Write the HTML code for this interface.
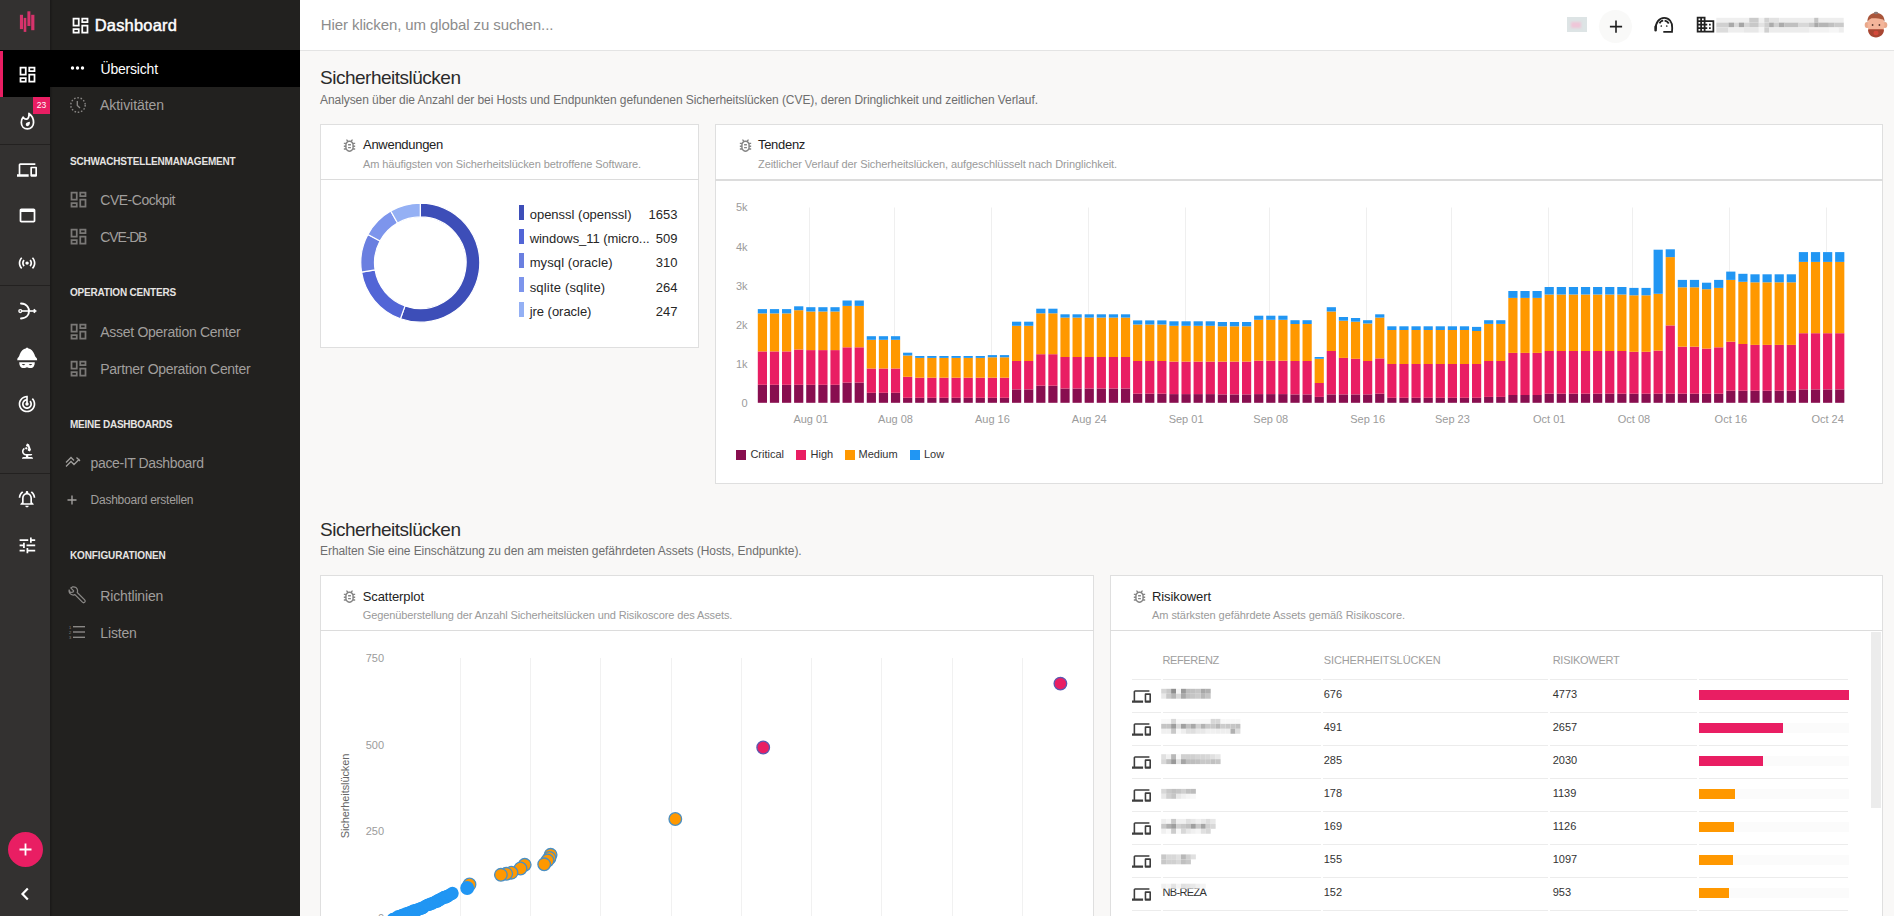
<!DOCTYPE html>
<html><head><meta charset="utf-8"><title>Dashboard</title>
<style>
html,body{margin:0;padding:0;}
body{width:1894px;height:916px;overflow:hidden;position:relative;background:#f9f8f7;font-family:"Liberation Sans", sans-serif;}
</style></head><body>
<div style="position:absolute;left:0;top:0;width:50px;height:916px;background:#333130"></div>
<div style="position:absolute;left:50px;top:0;width:250px;height:916px;background:#22211f"></div>
<div style="position:absolute;left:50px;top:0;width:3px;height:916px;background:linear-gradient(90deg,rgba(0,0,0,0.25),rgba(0,0,0,0))"></div>
<div style="position:absolute;left:0;top:50px;width:50px;height:47px;background:#000"></div>
<div style="position:absolute;left:0;top:51px;width:3px;height:46px;background:#e91e63"></div>
<div style="position:absolute;left:50px;top:50px;width:250px;height:37px;background:#000"></div>
<div style="position:absolute;left:0;top:144px;width:50px;height:1px;background:#232120"></div>
<div style="position:absolute;left:0;top:285px;width:50px;height:1px;background:#232120"></div>
<div style="position:absolute;left:0;top:473px;width:50px;height:1px;background:#232120"></div>
<div style="position:absolute;left:33px;top:97px;width:17px;height:17px;background:#e91e63"></div>
<div style="position:absolute;left:-58.50px;width:200px;text-align:center;top:100.70px;font-size:8.5px;line-height:8.5px;color:#fff;font-weight:400;white-space:nowrap;letter-spacing:-0.1px">23</div>
<svg style="position:absolute;left:0;top:0" width="50" height="50"><g fill="#d6336c"><rect x="19.9" y="14.8" width="3.1" height="14.3"/><rect x="23.7" y="17.9" width="2.6" height="14"/><rect x="27.4" y="11.3" width="3" height="14.7"/><rect x="31.2" y="14.8" width="3.2" height="15.4"/></g></svg>
<svg style="position:absolute;left:16.5px;top:64.4px" width="21" height="21" viewBox="0 0 24 24"><g><path d="M19 5v2h-4V5h4M9 5v6H5V5h4m10 8v6h-4v-6h4M9 17v2H5v-2h4M21 3h-8v6h8V3zM11 3H3v10h8V3zm10 8h-8v10h8V11zm-10 4H3v6h8v-6z" fill="#fff"/></g></svg>
<svg style="position:absolute;left:17px;top:110px" width="20" height="22" viewBox="0 0 20 22"><g transform="translate(1.2,1.2) scale(0.92,0.94)"><path d="M5.4 6.4 C6.6 8.1 8 8.8 9.3 8.4 C10.9 7.8 11.9 5.2 11.7 2.4 C14.9 4.6 16.7 8 16.7 12 C16.7 16 13.8 18.9 10 18.9 C6.2 18.9 3.4 16 3.4 12 C3.4 9.6 4.2 7.7 5.4 6.4 Z" fill="none" stroke="#fff" stroke-width="1.9" stroke-linejoin="round"/><path d="M12.7 11.3 C12.9 13.5 12.3 15.7 10.2 15.9 C8.8 16 8 14.9 8.3 13.7 C8.7 12.2 10.5 11.5 12.7 11.3 Z" fill="#fff"/></g></svg>
<svg style="position:absolute;left:17px;top:160px" width="20" height="20" viewBox="0 0 24 24"><g><path d="M4 6h18V4H4c-1.1 0-2 .9-2 2v11H0v3h14v-3H4V6zm19 2h-6c-.55 0-1 .45-1 1v10c0 .55.45 1 1 1h6c.55 0 1-.45 1-1V9c0-.55-.45-1-1-1zm-1 9h-4v-7h4v7z" fill="#fff"/></g></svg>
<svg style="position:absolute;left:16.7px;top:205.4px" width="21" height="21" viewBox="0 0 24 24"><g><path d="M19 4H5c-1.11 0-2 .9-2 2v12c0 1.1.89 2 2 2h14c1.1 0 2-.9 2-2V6c0-1.1-.89-2-2-2zm0 14H5V8h14v10z" fill="#fff"/></g></svg>
<svg style="position:absolute;left:16.8px;top:253.2px" width="20.2" height="20.2" viewBox="0 0 24 24"><g><path d="M7.76 16.24C6.67 15.16 6 13.66 6 12s.67-3.16 1.76-4.24l1.42 1.42C8.45 9.9 8 10.9 8 12c0 1.1.45 2.1 1.17 2.83l-1.41 1.41zm8.48 0C17.33 15.16 18 13.66 18 12s-.67-3.16-1.76-4.24l-1.42 1.42C15.55 9.9 16 10.9 16 12c0 1.1-.45 2.1-1.17 2.83l1.41 1.41zM12 10c-1.1 0-2 .9-2 2s.9 2 2 2 2-.9 2-2-.9-2-2-2zm8 2c0 2.21-.9 4.21-2.35 5.65l1.42 1.42C20.88 17.26 22 14.76 22 12s-1.12-5.26-2.93-7.07l-1.42 1.42C19.1 7.79 20 9.79 20 12zM6.35 6.35L4.93 4.93C3.12 6.74 2 9.24 2 12s1.12 5.26 2.93 7.07l1.42-1.42C4.9 16.21 4 14.21 4 12s.9-4.21 2.35-5.65z" fill="#fff"/></g></svg>
<svg style="position:absolute;left:14px;top:299px" width="26" height="24" viewBox="0 0 26 24"><circle cx="6.3" cy="12" r="1.45" fill="none" stroke="#fff" stroke-width="1.35"/><path d="M7.7 12 H20.5" stroke="#fff" stroke-width="1.6"/><path d="M20 10 L22.4 12 L20 14 Z" fill="#fff" stroke="#fff" stroke-width="0.8"/><path d="M7 4.5 C14 5 15 10 15 12 C15 14 14 19 7 19.5" fill="none" stroke="#fff" stroke-width="1.9" stroke-linecap="round"/></svg>
<svg style="position:absolute;left:16px;top:346px" width="23" height="23" viewBox="0 0 23 23"><path d="M1.2 14.3 L1.5 12.2 C2.5 11.5 3.2 10.5 3.7 8.5 C4.8 4.8 7.5 2.8 9.8 2.4 L10.3 1.8 L11.9 1.8 L12.4 2.4 C14.8 2.8 17.3 4.8 18.5 8.5 C19 10.5 19.7 11.5 20.8 12.2 L21.2 14.3 Z" fill="#fff"/><path d="M3.2 16.3 H18.8 C18.8 19.8 17.5 21.9 15.5 21.9 H13 L11 21.2 L9 21.9 H6.5 C4.5 21.9 3.2 19.8 3.2 16.3 Z" fill="#fff"/><path d="M5.8 18.2 C7 17.8 8.5 17.9 9.3 18.6 C8.5 19.5 7 19.6 5.8 18.2 Z M16.2 18.2 C15 17.8 13.5 17.9 12.7 18.6 C13.5 19.5 15 19.6 16.2 18.2 Z" fill="#333130"/></svg>
<svg style="position:absolute;left:17px;top:394px" width="20" height="20" viewBox="0 0 24 24"><g><path d="M19.07 4.93l-1.41 1.41C19.1 7.79 20 9.79 20 12c0 4.42-3.58 8-8 8s-8-3.58-8-8c0-4.08 3.05-7.44 7-7.93v2.02C8.16 6.57 6 9.03 6 12c0 3.31 2.69 6 6 6s6-2.69 6-6c0-1.66-.67-3.16-1.76-4.24l-1.41 1.41C15.55 9.9 16 10.9 16 12c0 2.21-1.79 4-4 4s-4-1.79-4-4c0-1.86 1.28-3.41 3-3.86v2.14c-.6.35-1 .98-1 1.72 0 1.1.9 2 2 2s2-.9 2-2c0-.74-.4-1.38-1-1.72V2h-1C6.48 2 2 6.48 2 12s4.48 10 10 10 10-4.48 10-10c0-2.76-1.12-5.26-2.93-7.07z" fill="#fff"/></g></svg>
<svg style="position:absolute;left:17.5px;top:441.8px" width="19" height="19" viewBox="0 0 24 24"><g><path d="M7 19c-1.1 0-2 .9-2 2h14c0-1.1-.9-2-2-2h-4v-2h3c1.1 0 2-.9 2-2h-8c-1.66 0-3-1.34-3-3 0-1.09.59-2.04 1.46-2.56C8.17 9.03 8 8.54 8 8c0-.21.04-.42.09-.62C6.28 8.13 5 9.92 5 12c0 2.76 2.24 5 5 5v2H7zM10.56 5.51C11.91 5.54 13 6.64 13 8c0 .75-.33 1.41-.85 1.87l.59 1.62.94-.34.34.94 1.88-.68-.34-.94.94-.34-2.74-7.53-.94.34-.34-.94-1.88.68.34.94-.94.35.56 1.54zM10.5 9.5c.83 0 1.5-.67 1.5-1.5s-.67-1.5-1.5-1.5S9 7.17 9 8s.67 1.5 1.5 1.5z" fill="#fff"/></g></svg>
<svg style="position:absolute;left:17px;top:489px" width="20" height="20" viewBox="0 0 24 24"><g><path d="M12 22c1.1 0 2-.9 2-2h-4c0 1.1.89 2 2 2zm6-6v-5c0-3.07-1.64-5.64-4.5-6.32V4c0-.83-.67-1.5-1.5-1.5s-1.5.67-1.5 1.5v.68C7.63 5.36 6 7.92 6 11v5l-2 2v1h16v-1l-2-2zm-2 1H8v-6c0-2.48 1.51-4.5 4-4.5s4 2.02 4 4.5v6zM7.58 4.08L6.15 2.65C3.75 4.48 2.17 7.3 2.03 10.5h2c.15-2.65 1.51-4.97 3.55-6.42zm12.39 6.42h2c-.15-3.2-1.73-6.02-4.12-7.85l-1.42 1.43c2.02 1.45 3.39 3.77 3.54 6.42z" fill="#fff"/></g></svg>
<svg style="position:absolute;left:16.7px;top:535.4px" width="20.8" height="20.8" viewBox="0 0 24 24"><g><path d="M3 17v2h6v-2H3zM3 5v2h10V5H3zm10 16v-2h8v-2h-8v-2h-2v6h2zM7 9v2H3v2h4v2h2V9H7zm14 4v-2H11v2h10zm-6-4h2V7h4V5h-4V3h-2v6z" fill="#fff"/></g></svg>
<div style="position:absolute;left:8px;top:832px;width:35px;height:35px;border-radius:50%;background:#e91e63"></div>
<svg style="position:absolute;left:8px;top:832px" width="35" height="35"><path d="M17.5 11.5v12M11.5 17.5h12" stroke="#fff" stroke-width="1.8"/></svg>
<svg style="position:absolute;left:15px;top:884px" width="20" height="20" viewBox="0 0 20 20"><path d="M12.8 4.6 L7.5 10 L12.8 15.4" fill="none" stroke="#fff" stroke-width="2.2"/></svg>
<svg style="position:absolute;left:69.5px;top:14.8px" width="21" height="21" viewBox="0 0 24 24"><g><path d="M19 5v2h-4V5h4M9 5v6H5V5h4m10 8v6h-4v-6h4M9 17v2H5v-2h4M21 3h-8v6h8V3zM11 3H3v10h8V3zm10 8h-8v10h8V11zm-10 4H3v6h8v-6z" fill="#fff"/></g></svg>
<div style="position:absolute;left:94.70px;top:16.53px;font-size:16.5px;line-height:16.5px;color:#fff;font-weight:400;white-space:nowrap;letter-spacing:0.198px;-webkit-text-stroke:0.45px #fff;">Dashboard</div>
<svg style="position:absolute;left:70px;top:63px" width="18" height="10"><g fill="#fff"><circle cx="2.5" cy="5" r="1.7"/><circle cx="7.5" cy="5" r="1.7"/><circle cx="12.5" cy="5" r="1.7"/></g></svg>
<div style="position:absolute;left:100.50px;top:62.15px;font-size:14px;line-height:14px;color:#fff;font-weight:400;white-space:nowrap;letter-spacing:-0.2px">Übersicht</div>
<svg style="position:absolute;left:69px;top:96px" width="18" height="18" viewBox="0 0 18 18"><circle cx="9" cy="9" r="7.2" fill="none" stroke="#8a8886" stroke-width="1.4" stroke-dasharray="1.6 1.7"/><path d="M8.3 5 V9.5 L11 12" fill="none" stroke="#8a8886" stroke-width="1.3"/></svg>
<div style="position:absolute;left:100.00px;top:98.45px;font-size:14px;line-height:14px;color:#a19f9d;font-weight:400;white-space:nowrap;letter-spacing:-0.05px">Aktivitäten</div>
<div style="position:absolute;left:70.00px;top:156.63px;font-size:10px;line-height:10px;color:#e6e4e2;font-weight:700;white-space:nowrap;letter-spacing:-0.188px;">SCHWACHSTELLENMANAGEMENT</div>
<svg style="position:absolute;left:67.5px;top:188.8px" width="21" height="21" viewBox="0 0 24 24"><g><path d="M19 5v2h-4V5h4M9 5v6H5V5h4m10 8v6h-4v-6h4M9 17v2H5v-2h4M21 3h-8v6h8V3zM11 3H3v10h8V3zm10 8h-8v10h8V11zm-10 4H3v6h8v-6z" fill="#7a7876"/></g></svg>
<div style="position:absolute;left:100.30px;top:192.95px;font-size:14px;line-height:14px;color:#a19f9d;font-weight:400;white-space:nowrap;letter-spacing:-0.494px;">CVE-Cockpit</div>
<svg style="position:absolute;left:67.5px;top:226.2px" width="21" height="21" viewBox="0 0 24 24"><g><path d="M19 5v2h-4V5h4M9 5v6H5V5h4m10 8v6h-4v-6h4M9 17v2H5v-2h4M21 3h-8v6h8V3zM11 3H3v10h8V3zm10 8h-8v10h8V11zm-10 4H3v6h8v-6z" fill="#7a7876"/></g></svg>
<div style="position:absolute;left:100.30px;top:230.35px;font-size:14px;line-height:14px;color:#a19f9d;font-weight:400;white-space:nowrap;letter-spacing:-1.150px;">CVE-DB</div>
<div style="position:absolute;left:70.00px;top:287.54px;font-size:10px;line-height:10px;color:#e6e4e2;font-weight:700;white-space:nowrap;letter-spacing:-0.192px;">OPERATION CENTERS</div>
<svg style="position:absolute;left:67.5px;top:320.8px" width="21" height="21" viewBox="0 0 24 24"><g><path d="M19 5v2h-4V5h4M9 5v6H5V5h4m10 8v6h-4v-6h4M9 17v2H5v-2h4M21 3h-8v6h8V3zM11 3H3v10h8V3zm10 8h-8v10h8V11zm-10 4H3v6h8v-6z" fill="#7a7876"/></g></svg>
<div style="position:absolute;left:100.30px;top:324.95px;font-size:14px;line-height:14px;color:#a19f9d;font-weight:400;white-space:nowrap;letter-spacing:-0.286px;">Asset Operation Center</div>
<svg style="position:absolute;left:67.5px;top:357.9px" width="21" height="21" viewBox="0 0 24 24"><g><path d="M19 5v2h-4V5h4M9 5v6H5V5h4m10 8v6h-4v-6h4M9 17v2H5v-2h4M21 3h-8v6h8V3zM11 3H3v10h8V3zm10 8h-8v10h8V11zm-10 4H3v6h8v-6z" fill="#7a7876"/></g></svg>
<div style="position:absolute;left:100.30px;top:362.05px;font-size:14px;line-height:14px;color:#a19f9d;font-weight:400;white-space:nowrap;letter-spacing:-0.300px;">Partner Operation Center</div>
<div style="position:absolute;left:70.00px;top:419.54px;font-size:10px;line-height:10px;color:#e6e4e2;font-weight:700;white-space:nowrap;letter-spacing:-0.251px;">MEINE DASHBOARDS</div>
<svg style="position:absolute;left:65px;top:456px" width="16" height="12" viewBox="0 0 16 12"><path d="M1 10.5 L6 5.5 L9 8.5 L14.5 3 M1 6.5 L6 1.5 L9 4.5 M11.5 1.5 L15 5" fill="none" stroke="#a19f9d" stroke-width="1.3"/></svg>
<div style="position:absolute;left:90.60px;top:456.45px;font-size:14px;line-height:14px;color:#a19f9d;font-weight:400;white-space:nowrap;letter-spacing:-0.387px;">pace-IT Dashboard</div>
<svg style="position:absolute;left:66px;top:494px" width="12" height="12"><path d="M6 1.5v9M1.5 6h9" stroke="#a19f9d" stroke-width="1.4"/></svg>
<div style="position:absolute;left:90.60px;top:493.54px;font-size:12px;line-height:12px;color:#a19f9d;font-weight:400;white-space:nowrap;letter-spacing:-0.247px;">Dashboard erstellen</div>
<div style="position:absolute;left:70.00px;top:550.53px;font-size:10px;line-height:10px;color:#e6e4e2;font-weight:700;white-space:nowrap;letter-spacing:-0.133px;">KONFIGURATIONEN</div>
<svg style="position:absolute;left:67px;top:585px" width="20" height="20" viewBox="0 0 24 24"><path d="M4.5 3.5 L8 7 L7 8.5 L4 9 L2.5 6 C2 9 4 12 7.5 12 C8.5 12 9 11.8 9.5 11.6 L18.5 20.6 C19.3 21.4 20.5 21.4 21.3 20.6 C22 19.8 22 18.7 21.2 17.9 L12.3 9 C12.6 8.3 12.7 7.7 12.7 7 C12.7 3.5 9.5 1.5 6.5 2.3 Z" fill="none" stroke="#8a8886" stroke-width="1.5" stroke-linejoin="round"/></svg>
<div style="position:absolute;left:100.30px;top:588.55px;font-size:14px;line-height:14px;color:#a19f9d;font-weight:400;white-space:nowrap;letter-spacing:-0.15px">Richtlinien</div>
<svg style="position:absolute;left:68px;top:624px" width="18" height="16" viewBox="0 0 18 16"><g fill="#8a8886"><rect x="5" y="2" width="12" height="1.4"/><rect x="5" y="7.3" width="12" height="1.4"/><rect x="5" y="12.6" width="12" height="1.4"/></g><g font-size="4" fill="#8a8886" font-family="Liberation Sans"><text x="1" y="4.5">1</text><text x="1" y="9.5">2</text><text x="1" y="14.5">3</text></g></svg>
<div style="position:absolute;left:100.30px;top:625.75px;font-size:14px;line-height:14px;color:#a19f9d;font-weight:400;white-space:nowrap;letter-spacing:-0.15px">Listen</div>
<div style="position:absolute;left:300px;top:0;width:1594px;height:51px;background:#fff;border-bottom:1px solid #e4e4e4;box-sizing:border-box"></div>
<div style="position:absolute;left:320.80px;top:17.30px;font-size:15px;line-height:15px;color:#8c8c8c;font-weight:400;white-space:nowrap;letter-spacing:-0.096px;">Hier klicken, um global zu suchen...</div>
<div style="position:absolute;left:1567px;top:17px;width:20px;height:15px;background:#dde4e5;filter:blur(0.6px)"></div>
<div style="position:absolute;left:1571px;top:21.5px;width:10px;height:6px;background:#efc6d8;filter:blur(1.2px)"></div>
<div style="position:absolute;left:1599px;top:9.5px;width:33px;height:33px;border-radius:50%;background:#f9f9f8"></div>
<svg style="position:absolute;left:1599px;top:9.5px" width="33" height="33"><path d="M17 10.5v12.2M10.9 16.6h12.2" stroke="#1e1e1e" stroke-width="1.6"/></svg>
<svg style="position:absolute;left:1653px;top:15px" width="22" height="20" viewBox="0 0 22 20"><path d="M2.7 14.6 C2.2 7.5 6.2 2.9 11.2 2.9 C16.2 2.9 19.6 7.3 19.2 13 L19.0 16.9 L10.3 16.9" fill="none" stroke="#222" stroke-width="1.8"/><path d="M2.6 11.8 L2.6 15.2" stroke="#222" stroke-width="2.4" stroke-linecap="round"/><path d="M6.5 8.4 C7.3 6.6 8.7 5.7 10.2 5.6 M11.6 5.6 C13.3 5.8 14.8 6.8 15.8 8.4" fill="none" stroke="#222" stroke-width="1.9"/><circle cx="8.3" cy="11" r="0.85" fill="#222"/><circle cx="13.75" cy="11" r="0.85" fill="#222"/></svg>
<svg style="position:absolute;left:1695px;top:13.8px" width="21" height="21" viewBox="0 0 24 24"><g><path d="M12 7V3H2v18h20V7H12zM6 19H4v-2h2v2zm0-4H4v-2h2v2zm0-4H4V9h2v2zm0-4H4V5h2v2zm4 12H8v-2h2v2zm0-4H8v-2h2v2zm0-4H8V9h2v2zm0-4H8V5h2v2zm10 12h-8v-2h2v-2h-2v-2h2v-2h-2V9h8v10zm-2-8h-2v2h2v-2zm0 4h-2v2h2v-2z" fill="#222"/></g></svg>
<svg style="position:absolute;left:0;top:0;overflow:visible;filter:blur(0.5px)" width="1" height="1"><rect x="1716.3" y="17.8" width="32.9" height="4.8" fill="#efefef"/><rect x="1749.2" y="17.8" width="9.6" height="4.8" fill="#cbcbcb"/><rect x="1758.8" y="17.8" width="5.5" height="4.8" fill="#f0f0f0"/><rect x="1764.3" y="17.8" width="4.8" height="4.8" fill="#d2d2d2"/><rect x="1769.1" y="17.8" width="10.3" height="4.8" fill="#e2e2e2"/><rect x="1779.5" y="17.8" width="34.7" height="4.8" fill="#ededed"/><rect x="1814.2" y="17.8" width="4.4" height="4.8" fill="#c4c4c4"/><rect x="1818.6" y="17.8" width="25.1" height="4.8" fill="#eeeeee"/><rect x="1716.3" y="22.6" width="12.2" height="4.8" fill="#d0d0d0"/><rect x="1728.5" y="22.6" width="5.5" height="4.8" fill="#a9a9a9"/><rect x="1734.0" y="22.6" width="4.8" height="4.8" fill="#d8d8d8"/><rect x="1738.8" y="22.6" width="5.2" height="4.8" fill="#a5a5a5"/><rect x="1744.0" y="22.6" width="5.2" height="4.8" fill="#d5d5d5"/><rect x="1749.2" y="22.6" width="9.6" height="4.8" fill="#c8c8c8"/><rect x="1758.8" y="22.6" width="5.5" height="4.8" fill="#e3e3e3"/><rect x="1764.3" y="22.6" width="4.8" height="4.8" fill="#cfcfcf"/><rect x="1769.1" y="22.6" width="4.8" height="4.8" fill="#acacac"/><rect x="1773.9" y="22.6" width="4.8" height="4.8" fill="#cfcfcf"/><rect x="1778.7" y="22.6" width="5.9" height="4.8" fill="#ababab"/><rect x="1784.6" y="22.6" width="14.0" height="4.8" fill="#c0c0c0"/><rect x="1798.7" y="22.6" width="10.3" height="4.8" fill="#d8d8d8"/><rect x="1809.0" y="22.6" width="5.2" height="4.8" fill="#cacaca"/><rect x="1814.2" y="22.6" width="4.4" height="4.8" fill="#a8a8a8"/><rect x="1818.6" y="22.6" width="10.3" height="4.8" fill="#b5b5b5"/><rect x="1829.0" y="22.6" width="5.2" height="4.8" fill="#c0c0c0"/><rect x="1834.2" y="22.6" width="9.6" height="4.8" fill="#cacaca"/><rect x="1716.3" y="27.4" width="12.2" height="5.2" fill="#dcdcdc"/><rect x="1728.5" y="27.4" width="15.5" height="5.2" fill="#eeeeee"/><rect x="1744.0" y="27.4" width="14.8" height="5.2" fill="#e8e8e8"/><rect x="1758.8" y="27.4" width="5.5" height="5.2" fill="#f5f5f5"/><rect x="1764.3" y="27.4" width="4.8" height="5.2" fill="#d0d0d0"/><rect x="1769.1" y="27.4" width="39.9" height="5.2" fill="#ececec"/><rect x="1809.0" y="27.4" width="20.0" height="5.2" fill="#f2f2f2"/><rect x="1829.0" y="27.4" width="9.6" height="5.2" fill="#f6f6f6"/><rect x="1838.6" y="27.4" width="5.2" height="5.2" fill="#eeeeee"/></svg>
<svg style="position:absolute;left:1862px;top:10px" width="28" height="30" viewBox="0 0 28 30"><ellipse cx="5" cy="15" rx="2.3" ry="3" fill="#e9a88a"/><ellipse cx="23" cy="15" rx="2.3" ry="3" fill="#e9a88a"/><ellipse cx="14" cy="15" rx="8.5" ry="10" fill="#f4b59a"/><path d="M5.5 12 C5 6.5 9 2.8 14 2.8 C19 2.8 23 6.5 22.5 12 L21 9.6 C18 8.5 13 8 9.5 8.2 C7.5 9 6.5 10.2 5.5 12Z" fill="#a9553a"/><ellipse cx="14" cy="3" rx="2.2" ry="1.2" fill="#8a7a78"/><path d="M6 19.6 C8 19 10 19.3 14 19.3 C18 19.3 20 19 22 19.6 C22 24.5 18.5 27.4 14 27.4 C9.5 27.4 6 24.5 6 19.6Z" fill="#a84632"/><ellipse cx="14" cy="23" rx="2.6" ry="2.2" fill="#d4493a"/><circle cx="10.6" cy="15" r="0.9" fill="#5a3a30"/><circle cx="17.4" cy="15" r="0.9" fill="#5a3a30"/></svg>
<div style="position:absolute;left:320.00px;top:68.22px;font-size:19px;line-height:19px;color:#2b2b2b;font-weight:400;white-space:nowrap;letter-spacing:-0.495px;">Sicherheitslücken</div>
<div style="position:absolute;left:320.00px;top:93.64px;font-size:12px;line-height:12px;color:#6e6e6e;font-weight:400;white-space:nowrap;letter-spacing:-0.069px;">Analysen über die Anzahl der bei Hosts und Endpunkten gefundenen Sicherheitslücken (CVE), deren Dringlichkeit und zeitlichen Verlauf.</div>
<div style="position:absolute;left:320px;top:124px;width:379px;height:224px;background:#fff;border:1px solid #dfdfdf;box-sizing:border-box"></div><div style="position:absolute;left:320px;top:179px;width:379px;height:1px;background:#dcdcdc"></div>
<svg style="position:absolute;left:341px;top:137px" width="17" height="17" viewBox="0 0 24 24"><g><path d="M20 8h-2.81c-.45-.78-1.07-1.45-1.82-1.96L17 4.41 15.59 3l-2.17 2.17C12.96 5.06 12.49 5 12 5s-.96.06-1.41.17L8.41 3 7 4.41l1.62 1.63C7.88 6.55 7.26 7.22 6.81 8H4v2h2.09c-.05.33-.09.66-.09 1v1H4v2h2v1c0 .34.04.67.09 1H4v2h2.81c1.04 1.79 2.97 3 5.19 3s4.15-1.21 5.19-3H20v-2h-2.09c.05-.33.09-.66.09-1v-1h2v-2h-2v-1c0-.34-.04-.67-.09-1H20V8zm-4 4v3c0 .22-.02.44-.05.65l-.1.65-.37.65c-.72 1.24-2.04 2.05-3.48 2.05s-2.76-.81-3.48-2.05l-.37-.65-.1-.65C8.02 15.44 8 15.22 8 15v-4c0-.23.02-.45.05-.65l.1-.65.37-.65c.3-.52.72-.97 1.21-1.31l.57-.39.74-.18c.31-.08.63-.12.96-.12.32 0 .65.04.95.12l.68.16.61.42c.5.34.91.78 1.21 1.31l.38.65.1.65c.03.2.05.42.05.64v1zm-6 2h4v2h-4zm0-4h4v2h-4z" fill="#858585"/></g></svg>
<div style="position:absolute;left:363.00px;top:138.20px;font-size:13px;line-height:13px;color:#222;font-weight:400;white-space:nowrap;letter-spacing:-0.284px;">Anwendungen</div>
<div style="position:absolute;left:363.00px;top:159.39px;font-size:11px;line-height:11px;color:#9a9a9a;font-weight:400;white-space:nowrap;letter-spacing:-0.077px;">Am häufigsten von Sicherheitslücken betroffene Software.</div>
<svg style="position:absolute;left:0;top:0;overflow:visible" width="1" height="1"><path d="M420.30 203.20 A59.5 59.5 0 1 1 400.45 318.79 L405.02 305.88 A45.8 45.8 0 1 0 420.30 216.90 Z" fill="#3d4eb8" stroke="#fff" stroke-width="1.2"/><path d="M400.45 318.79 A59.5 59.5 0 0 1 361.55 272.09 L375.07 269.93 A45.8 45.8 0 0 0 405.02 305.88 Z" fill="#5265d6" stroke="#fff" stroke-width="1.2"/><path d="M361.55 272.09 A59.5 59.5 0 0 1 367.93 234.46 L379.99 240.97 A45.8 45.8 0 0 0 375.07 269.93 Z" fill="#6a7fe0" stroke="#fff" stroke-width="1.2"/><path d="M367.93 234.46 A59.5 59.5 0 0 1 390.72 211.07 L397.53 222.96 A45.8 45.8 0 0 0 379.99 240.97 Z" fill="#7d95ec" stroke="#fff" stroke-width="1.2"/><path d="M390.72 211.07 A59.5 59.5 0 0 1 420.30 203.20 L420.30 216.90 A45.8 45.8 0 0 0 397.53 222.96 Z" fill="#94b0f4" stroke="#fff" stroke-width="1.2"/></svg>
<div style="position:absolute;left:519px;top:204.8px;width:5px;height:15px;background:#3d4eb8"></div>
<div style="position:absolute;left:529.70px;top:208.00px;font-size:13px;line-height:13px;color:#262626;font-weight:400;white-space:nowrap;letter-spacing:-0.005px;">openssl (openssl)</div>
<div style="position:absolute;right:1216.50px;top:208.00px;font-size:13px;line-height:13px;color:#262626;font-weight:400;white-space:nowrap;">1653</div>
<div style="position:absolute;left:519px;top:229.0px;width:5px;height:15px;background:#5265d6"></div>
<div style="position:absolute;left:529.70px;top:232.20px;font-size:13px;line-height:13px;color:#262626;font-weight:400;white-space:nowrap;letter-spacing:-0.066px;">windows_11 (micro...</div>
<div style="position:absolute;right:1216.50px;top:232.20px;font-size:13px;line-height:13px;color:#262626;font-weight:400;white-space:nowrap;">509</div>
<div style="position:absolute;left:519px;top:253.2px;width:5px;height:15px;background:#6a7fe0"></div>
<div style="position:absolute;left:529.70px;top:256.40px;font-size:13px;line-height:13px;color:#262626;font-weight:400;white-space:nowrap;letter-spacing:0.098px;">mysql (oracle)</div>
<div style="position:absolute;right:1216.50px;top:256.40px;font-size:13px;line-height:13px;color:#262626;font-weight:400;white-space:nowrap;">310</div>
<div style="position:absolute;left:519px;top:277.4px;width:5px;height:15px;background:#7d95ec"></div>
<div style="position:absolute;left:529.70px;top:280.60px;font-size:13px;line-height:13px;color:#262626;font-weight:400;white-space:nowrap;letter-spacing:0.176px;">sqlite (sqlite)</div>
<div style="position:absolute;right:1216.50px;top:280.60px;font-size:13px;line-height:13px;color:#262626;font-weight:400;white-space:nowrap;">264</div>
<div style="position:absolute;left:519px;top:301.6px;width:5px;height:15px;background:#94b0f4"></div>
<div style="position:absolute;left:529.70px;top:304.80px;font-size:13px;line-height:13px;color:#262626;font-weight:400;white-space:nowrap;letter-spacing:-0.035px;">jre (oracle)</div>
<div style="position:absolute;right:1216.50px;top:304.80px;font-size:13px;line-height:13px;color:#262626;font-weight:400;white-space:nowrap;">247</div>
<div style="position:absolute;left:715px;top:124px;width:1168px;height:360px;background:#fff;border:1px solid #dfdfdf;box-sizing:border-box"></div><div style="position:absolute;left:715px;top:179px;width:1168px;height:2px;background:#dcdcdc"></div>
<svg style="position:absolute;left:736.5px;top:137px" width="17" height="17" viewBox="0 0 24 24"><g><path d="M20 8h-2.81c-.45-.78-1.07-1.45-1.82-1.96L17 4.41 15.59 3l-2.17 2.17C12.96 5.06 12.49 5 12 5s-.96.06-1.41.17L8.41 3 7 4.41l1.62 1.63C7.88 6.55 7.26 7.22 6.81 8H4v2h2.09c-.05.33-.09.66-.09 1v1H4v2h2v1c0 .34.04.67.09 1H4v2h2.81c1.04 1.79 2.97 3 5.19 3s4.15-1.21 5.19-3H20v-2h-2.09c.05-.33.09-.66.09-1v-1h2v-2h-2v-1c0-.34-.04-.67-.09-1H20V8zm-4 4v3c0 .22-.02.44-.05.65l-.1.65-.37.65c-.72 1.24-2.04 2.05-3.48 2.05s-2.76-.81-3.48-2.05l-.37-.65-.1-.65C8.02 15.44 8 15.22 8 15v-4c0-.23.02-.45.05-.65l.1-.65.37-.65c.3-.52.72-.97 1.21-1.31l.57-.39.74-.18c.31-.08.63-.12.96-.12.32 0 .65.04.95.12l.68.16.61.42c.5.34.91.78 1.21 1.31l.38.65.1.65c.03.2.05.42.05.64v1zm-6 2h4v2h-4zm0-4h4v2h-4z" fill="#858585"/></g></svg>
<div style="position:absolute;left:758.00px;top:138.20px;font-size:13px;line-height:13px;color:#222;font-weight:400;white-space:nowrap;letter-spacing:-0.307px;">Tendenz</div>
<div style="position:absolute;left:758.00px;top:159.39px;font-size:11px;line-height:11px;color:#9a9a9a;font-weight:400;white-space:nowrap;letter-spacing:-0.078px;">Zeitlicher Verlauf der Sicherheitslücken, aufgeschlüsselt nach Dringlichkeit.</div>
<div style="position:absolute;right:1146.50px;top:397.69px;font-size:11px;line-height:11px;color:#9b9b9b;font-weight:400;white-space:nowrap;">0</div>
<div style="position:absolute;right:1146.50px;top:358.65px;font-size:11px;line-height:11px;color:#9b9b9b;font-weight:400;white-space:nowrap;">1k</div>
<div style="position:absolute;right:1146.50px;top:319.61px;font-size:11px;line-height:11px;color:#9b9b9b;font-weight:400;white-space:nowrap;">2k</div>
<div style="position:absolute;right:1146.50px;top:280.57px;font-size:11px;line-height:11px;color:#9b9b9b;font-weight:400;white-space:nowrap;">3k</div>
<div style="position:absolute;right:1146.50px;top:241.53px;font-size:11px;line-height:11px;color:#9b9b9b;font-weight:400;white-space:nowrap;">4k</div>
<div style="position:absolute;right:1146.50px;top:202.49px;font-size:11px;line-height:11px;color:#9b9b9b;font-weight:400;white-space:nowrap;">5k</div>
<svg style="position:absolute;left:0;top:0;overflow:visible" width="1" height="1"><line x1="809.5" y1="207.5" x2="809.5" y2="403" stroke="#efefef" stroke-width="1"/><line x1="894.5" y1="207.5" x2="894.5" y2="403" stroke="#efefef" stroke-width="1"/><line x1="991.5" y1="207.5" x2="991.5" y2="403" stroke="#efefef" stroke-width="1"/><line x1="1088.5" y1="207.5" x2="1088.5" y2="403" stroke="#efefef" stroke-width="1"/><line x1="1185.5" y1="207.5" x2="1185.5" y2="403" stroke="#efefef" stroke-width="1"/><line x1="1269.5" y1="207.5" x2="1269.5" y2="403" stroke="#efefef" stroke-width="1"/><line x1="1366.5" y1="207.5" x2="1366.5" y2="403" stroke="#efefef" stroke-width="1"/><line x1="1451.5" y1="207.5" x2="1451.5" y2="403" stroke="#efefef" stroke-width="1"/><line x1="1548.5" y1="207.5" x2="1548.5" y2="403" stroke="#efefef" stroke-width="1"/><line x1="1632.5" y1="207.5" x2="1632.5" y2="403" stroke="#efefef" stroke-width="1"/><line x1="1729.5" y1="207.5" x2="1729.5" y2="403" stroke="#efefef" stroke-width="1"/><line x1="1826.5" y1="207.5" x2="1826.5" y2="403" stroke="#efefef" stroke-width="1"/><rect x="757.80" y="384.80" width="9.2" height="18.00" fill="#880e4f"/><rect x="757.80" y="351.40" width="9.2" height="33.40" fill="#e91e63"/><rect x="757.80" y="313.40" width="9.2" height="38.00" fill="#ff9800"/><rect x="757.80" y="309.10" width="9.2" height="4.30" fill="#2196f3"/><rect x="769.90" y="384.80" width="9.2" height="18.00" fill="#880e4f"/><rect x="769.90" y="351.40" width="9.2" height="33.40" fill="#e91e63"/><rect x="769.90" y="313.40" width="9.2" height="38.00" fill="#ff9800"/><rect x="769.90" y="309.10" width="9.2" height="4.30" fill="#2196f3"/><rect x="782.01" y="384.80" width="9.2" height="18.00" fill="#880e4f"/><rect x="782.01" y="351.40" width="9.2" height="33.40" fill="#e91e63"/><rect x="782.01" y="313.40" width="9.2" height="38.00" fill="#ff9800"/><rect x="782.01" y="309.10" width="9.2" height="4.30" fill="#2196f3"/><rect x="794.11" y="384.80" width="9.2" height="18.00" fill="#880e4f"/><rect x="794.11" y="349.50" width="9.2" height="35.30" fill="#e91e63"/><rect x="794.11" y="310.20" width="9.2" height="39.30" fill="#ff9800"/><rect x="794.11" y="306.30" width="9.2" height="3.90" fill="#2196f3"/><rect x="806.22" y="384.80" width="9.2" height="18.00" fill="#880e4f"/><rect x="806.22" y="350.10" width="9.2" height="34.70" fill="#e91e63"/><rect x="806.22" y="311.50" width="9.2" height="38.60" fill="#ff9800"/><rect x="806.22" y="307.20" width="9.2" height="4.30" fill="#2196f3"/><rect x="818.32" y="384.80" width="9.2" height="18.00" fill="#880e4f"/><rect x="818.32" y="350.10" width="9.2" height="34.70" fill="#e91e63"/><rect x="818.32" y="311.50" width="9.2" height="38.60" fill="#ff9800"/><rect x="818.32" y="307.20" width="9.2" height="4.30" fill="#2196f3"/><rect x="830.43" y="384.80" width="9.2" height="18.00" fill="#880e4f"/><rect x="830.43" y="350.10" width="9.2" height="34.70" fill="#e91e63"/><rect x="830.43" y="311.50" width="9.2" height="38.60" fill="#ff9800"/><rect x="830.43" y="307.20" width="9.2" height="4.30" fill="#2196f3"/><rect x="842.53" y="382.60" width="9.2" height="20.20" fill="#880e4f"/><rect x="842.53" y="347.30" width="9.2" height="35.30" fill="#e91e63"/><rect x="842.53" y="305.90" width="9.2" height="41.40" fill="#ff9800"/><rect x="842.53" y="300.50" width="9.2" height="5.40" fill="#2196f3"/><rect x="854.64" y="382.60" width="9.2" height="20.20" fill="#880e4f"/><rect x="854.64" y="347.30" width="9.2" height="35.30" fill="#e91e63"/><rect x="854.64" y="305.90" width="9.2" height="41.40" fill="#ff9800"/><rect x="854.64" y="300.50" width="9.2" height="5.40" fill="#2196f3"/><rect x="866.75" y="392.80" width="9.2" height="10.00" fill="#880e4f"/><rect x="866.75" y="368.50" width="9.2" height="24.30" fill="#e91e63"/><rect x="866.75" y="339.80" width="9.2" height="28.70" fill="#ff9800"/><rect x="866.75" y="336.20" width="9.2" height="3.60" fill="#2196f3"/><rect x="878.85" y="392.80" width="9.2" height="10.00" fill="#880e4f"/><rect x="878.85" y="368.50" width="9.2" height="24.30" fill="#e91e63"/><rect x="878.85" y="339.80" width="9.2" height="28.70" fill="#ff9800"/><rect x="878.85" y="336.20" width="9.2" height="3.60" fill="#2196f3"/><rect x="890.95" y="392.80" width="9.2" height="10.00" fill="#880e4f"/><rect x="890.95" y="368.50" width="9.2" height="24.30" fill="#e91e63"/><rect x="890.95" y="339.80" width="9.2" height="28.70" fill="#ff9800"/><rect x="890.95" y="336.20" width="9.2" height="3.60" fill="#2196f3"/><rect x="903.06" y="397.80" width="9.2" height="5.00" fill="#880e4f"/><rect x="903.06" y="376.80" width="9.2" height="21.00" fill="#e91e63"/><rect x="903.06" y="355.50" width="9.2" height="21.30" fill="#ff9800"/><rect x="903.06" y="352.70" width="9.2" height="2.80" fill="#2196f3"/><rect x="915.16" y="397.80" width="9.2" height="5.00" fill="#880e4f"/><rect x="915.16" y="377.70" width="9.2" height="20.10" fill="#e91e63"/><rect x="915.16" y="357.90" width="9.2" height="19.80" fill="#ff9800"/><rect x="915.16" y="356.00" width="9.2" height="1.90" fill="#2196f3"/><rect x="927.27" y="397.80" width="9.2" height="5.00" fill="#880e4f"/><rect x="927.27" y="377.70" width="9.2" height="20.10" fill="#e91e63"/><rect x="927.27" y="357.90" width="9.2" height="19.80" fill="#ff9800"/><rect x="927.27" y="356.00" width="9.2" height="1.90" fill="#2196f3"/><rect x="939.38" y="397.80" width="9.2" height="5.00" fill="#880e4f"/><rect x="939.38" y="377.70" width="9.2" height="20.10" fill="#e91e63"/><rect x="939.38" y="357.90" width="9.2" height="19.80" fill="#ff9800"/><rect x="939.38" y="356.00" width="9.2" height="1.90" fill="#2196f3"/><rect x="951.48" y="397.80" width="9.2" height="5.00" fill="#880e4f"/><rect x="951.48" y="377.70" width="9.2" height="20.10" fill="#e91e63"/><rect x="951.48" y="357.90" width="9.2" height="19.80" fill="#ff9800"/><rect x="951.48" y="356.00" width="9.2" height="1.90" fill="#2196f3"/><rect x="963.58" y="397.80" width="9.2" height="5.00" fill="#880e4f"/><rect x="963.58" y="377.70" width="9.2" height="20.10" fill="#e91e63"/><rect x="963.58" y="357.90" width="9.2" height="19.80" fill="#ff9800"/><rect x="963.58" y="356.00" width="9.2" height="1.90" fill="#2196f3"/><rect x="975.69" y="397.80" width="9.2" height="5.00" fill="#880e4f"/><rect x="975.69" y="377.70" width="9.2" height="20.10" fill="#e91e63"/><rect x="975.69" y="357.90" width="9.2" height="19.80" fill="#ff9800"/><rect x="975.69" y="356.00" width="9.2" height="1.90" fill="#2196f3"/><rect x="987.79" y="397.80" width="9.2" height="5.00" fill="#880e4f"/><rect x="987.79" y="377.70" width="9.2" height="20.10" fill="#e91e63"/><rect x="987.79" y="357.30" width="9.2" height="20.40" fill="#ff9800"/><rect x="987.79" y="355.10" width="9.2" height="2.20" fill="#2196f3"/><rect x="999.90" y="397.80" width="9.2" height="5.00" fill="#880e4f"/><rect x="999.90" y="377.70" width="9.2" height="20.10" fill="#e91e63"/><rect x="999.90" y="357.30" width="9.2" height="20.40" fill="#ff9800"/><rect x="999.90" y="355.10" width="9.2" height="2.20" fill="#2196f3"/><rect x="1012.00" y="389.40" width="9.2" height="13.40" fill="#880e4f"/><rect x="1012.00" y="361.00" width="9.2" height="28.40" fill="#e91e63"/><rect x="1012.00" y="325.80" width="9.2" height="35.20" fill="#ff9800"/><rect x="1012.00" y="321.70" width="9.2" height="4.10" fill="#2196f3"/><rect x="1024.11" y="389.40" width="9.2" height="13.40" fill="#880e4f"/><rect x="1024.11" y="361.00" width="9.2" height="28.40" fill="#e91e63"/><rect x="1024.11" y="325.80" width="9.2" height="35.20" fill="#ff9800"/><rect x="1024.11" y="321.70" width="9.2" height="4.10" fill="#2196f3"/><rect x="1036.22" y="385.70" width="9.2" height="17.10" fill="#880e4f"/><rect x="1036.22" y="354.20" width="9.2" height="31.50" fill="#e91e63"/><rect x="1036.22" y="313.30" width="9.2" height="40.90" fill="#ff9800"/><rect x="1036.22" y="308.70" width="9.2" height="4.60" fill="#2196f3"/><rect x="1048.32" y="385.70" width="9.2" height="17.10" fill="#880e4f"/><rect x="1048.32" y="354.20" width="9.2" height="31.50" fill="#e91e63"/><rect x="1048.32" y="313.30" width="9.2" height="40.90" fill="#ff9800"/><rect x="1048.32" y="308.70" width="9.2" height="4.60" fill="#2196f3"/><rect x="1060.43" y="388.50" width="9.2" height="14.30" fill="#880e4f"/><rect x="1060.43" y="357.00" width="9.2" height="31.50" fill="#e91e63"/><rect x="1060.43" y="317.60" width="9.2" height="39.40" fill="#ff9800"/><rect x="1060.43" y="314.30" width="9.2" height="3.30" fill="#2196f3"/><rect x="1072.53" y="388.50" width="9.2" height="14.30" fill="#880e4f"/><rect x="1072.53" y="357.00" width="9.2" height="31.50" fill="#e91e63"/><rect x="1072.53" y="317.60" width="9.2" height="39.40" fill="#ff9800"/><rect x="1072.53" y="314.30" width="9.2" height="3.30" fill="#2196f3"/><rect x="1084.64" y="388.50" width="9.2" height="14.30" fill="#880e4f"/><rect x="1084.64" y="357.00" width="9.2" height="31.50" fill="#e91e63"/><rect x="1084.64" y="317.60" width="9.2" height="39.40" fill="#ff9800"/><rect x="1084.64" y="314.30" width="9.2" height="3.30" fill="#2196f3"/><rect x="1096.74" y="388.50" width="9.2" height="14.30" fill="#880e4f"/><rect x="1096.74" y="357.00" width="9.2" height="31.50" fill="#e91e63"/><rect x="1096.74" y="317.60" width="9.2" height="39.40" fill="#ff9800"/><rect x="1096.74" y="314.30" width="9.2" height="3.30" fill="#2196f3"/><rect x="1108.85" y="388.50" width="9.2" height="14.30" fill="#880e4f"/><rect x="1108.85" y="357.00" width="9.2" height="31.50" fill="#e91e63"/><rect x="1108.85" y="317.60" width="9.2" height="39.40" fill="#ff9800"/><rect x="1108.85" y="314.30" width="9.2" height="3.30" fill="#2196f3"/><rect x="1120.95" y="388.50" width="9.2" height="14.30" fill="#880e4f"/><rect x="1120.95" y="357.00" width="9.2" height="31.50" fill="#e91e63"/><rect x="1120.95" y="317.60" width="9.2" height="39.40" fill="#ff9800"/><rect x="1120.95" y="314.30" width="9.2" height="3.30" fill="#2196f3"/><rect x="1133.06" y="393.70" width="9.2" height="9.10" fill="#880e4f"/><rect x="1133.06" y="361.00" width="9.2" height="32.70" fill="#e91e63"/><rect x="1133.06" y="324.50" width="9.2" height="36.50" fill="#ff9800"/><rect x="1133.06" y="320.40" width="9.2" height="4.10" fill="#2196f3"/><rect x="1145.16" y="393.70" width="9.2" height="9.10" fill="#880e4f"/><rect x="1145.16" y="361.00" width="9.2" height="32.70" fill="#e91e63"/><rect x="1145.16" y="324.50" width="9.2" height="36.50" fill="#ff9800"/><rect x="1145.16" y="320.40" width="9.2" height="4.10" fill="#2196f3"/><rect x="1157.27" y="393.70" width="9.2" height="9.10" fill="#880e4f"/><rect x="1157.27" y="361.00" width="9.2" height="32.70" fill="#e91e63"/><rect x="1157.27" y="324.50" width="9.2" height="36.50" fill="#ff9800"/><rect x="1157.27" y="320.40" width="9.2" height="4.10" fill="#2196f3"/><rect x="1169.37" y="394.10" width="9.2" height="8.70" fill="#880e4f"/><rect x="1169.37" y="361.60" width="9.2" height="32.50" fill="#e91e63"/><rect x="1169.37" y="325.80" width="9.2" height="35.80" fill="#ff9800"/><rect x="1169.37" y="321.30" width="9.2" height="4.50" fill="#2196f3"/><rect x="1181.48" y="394.10" width="9.2" height="8.70" fill="#880e4f"/><rect x="1181.48" y="361.60" width="9.2" height="32.50" fill="#e91e63"/><rect x="1181.48" y="325.80" width="9.2" height="35.80" fill="#ff9800"/><rect x="1181.48" y="321.30" width="9.2" height="4.50" fill="#2196f3"/><rect x="1193.58" y="394.10" width="9.2" height="8.70" fill="#880e4f"/><rect x="1193.58" y="361.60" width="9.2" height="32.50" fill="#e91e63"/><rect x="1193.58" y="325.80" width="9.2" height="35.80" fill="#ff9800"/><rect x="1193.58" y="321.30" width="9.2" height="4.50" fill="#2196f3"/><rect x="1205.68" y="394.10" width="9.2" height="8.70" fill="#880e4f"/><rect x="1205.68" y="361.60" width="9.2" height="32.50" fill="#e91e63"/><rect x="1205.68" y="325.80" width="9.2" height="35.80" fill="#ff9800"/><rect x="1205.68" y="321.30" width="9.2" height="4.50" fill="#2196f3"/><rect x="1217.79" y="394.40" width="9.2" height="8.40" fill="#880e4f"/><rect x="1217.79" y="361.60" width="9.2" height="32.80" fill="#e91e63"/><rect x="1217.79" y="326.30" width="9.2" height="35.30" fill="#ff9800"/><rect x="1217.79" y="322.00" width="9.2" height="4.30" fill="#2196f3"/><rect x="1229.89" y="394.40" width="9.2" height="8.40" fill="#880e4f"/><rect x="1229.89" y="361.60" width="9.2" height="32.80" fill="#e91e63"/><rect x="1229.89" y="326.30" width="9.2" height="35.30" fill="#ff9800"/><rect x="1229.89" y="322.00" width="9.2" height="4.30" fill="#2196f3"/><rect x="1242.00" y="394.40" width="9.2" height="8.40" fill="#880e4f"/><rect x="1242.00" y="361.60" width="9.2" height="32.80" fill="#e91e63"/><rect x="1242.00" y="326.30" width="9.2" height="35.30" fill="#ff9800"/><rect x="1242.00" y="322.00" width="9.2" height="4.30" fill="#2196f3"/><rect x="1254.11" y="394.10" width="9.2" height="8.70" fill="#880e4f"/><rect x="1254.11" y="360.70" width="9.2" height="33.40" fill="#e91e63"/><rect x="1254.11" y="319.80" width="9.2" height="40.90" fill="#ff9800"/><rect x="1254.11" y="315.70" width="9.2" height="4.10" fill="#2196f3"/><rect x="1266.21" y="394.10" width="9.2" height="8.70" fill="#880e4f"/><rect x="1266.21" y="360.70" width="9.2" height="33.40" fill="#e91e63"/><rect x="1266.21" y="319.80" width="9.2" height="40.90" fill="#ff9800"/><rect x="1266.21" y="315.70" width="9.2" height="4.10" fill="#2196f3"/><rect x="1278.32" y="394.10" width="9.2" height="8.70" fill="#880e4f"/><rect x="1278.32" y="360.70" width="9.2" height="33.40" fill="#e91e63"/><rect x="1278.32" y="319.80" width="9.2" height="40.90" fill="#ff9800"/><rect x="1278.32" y="315.70" width="9.2" height="4.10" fill="#2196f3"/><rect x="1290.42" y="394.40" width="9.2" height="8.40" fill="#880e4f"/><rect x="1290.42" y="361.00" width="9.2" height="33.40" fill="#e91e63"/><rect x="1290.42" y="324.00" width="9.2" height="37.00" fill="#ff9800"/><rect x="1290.42" y="320.20" width="9.2" height="3.80" fill="#2196f3"/><rect x="1302.53" y="394.40" width="9.2" height="8.40" fill="#880e4f"/><rect x="1302.53" y="361.00" width="9.2" height="33.40" fill="#e91e63"/><rect x="1302.53" y="324.00" width="9.2" height="37.00" fill="#ff9800"/><rect x="1302.53" y="320.20" width="9.2" height="3.80" fill="#2196f3"/><rect x="1314.63" y="396.90" width="9.2" height="5.90" fill="#880e4f"/><rect x="1314.63" y="383.00" width="9.2" height="13.90" fill="#e91e63"/><rect x="1314.63" y="358.80" width="9.2" height="24.20" fill="#ff9800"/><rect x="1314.63" y="357.00" width="9.2" height="1.80" fill="#2196f3"/><rect x="1326.74" y="394.40" width="9.2" height="8.40" fill="#880e4f"/><rect x="1326.74" y="351.00" width="9.2" height="43.40" fill="#e91e63"/><rect x="1326.74" y="311.50" width="9.2" height="39.50" fill="#ff9800"/><rect x="1326.74" y="307.20" width="9.2" height="4.30" fill="#2196f3"/><rect x="1338.84" y="394.40" width="9.2" height="8.40" fill="#880e4f"/><rect x="1338.84" y="357.90" width="9.2" height="36.50" fill="#e91e63"/><rect x="1338.84" y="320.70" width="9.2" height="37.20" fill="#ff9800"/><rect x="1338.84" y="317.00" width="9.2" height="3.70" fill="#2196f3"/><rect x="1350.95" y="394.40" width="9.2" height="8.40" fill="#880e4f"/><rect x="1350.95" y="358.80" width="9.2" height="35.60" fill="#e91e63"/><rect x="1350.95" y="321.70" width="9.2" height="37.10" fill="#ff9800"/><rect x="1350.95" y="318.00" width="9.2" height="3.70" fill="#2196f3"/><rect x="1363.05" y="394.40" width="9.2" height="8.40" fill="#880e4f"/><rect x="1363.05" y="361.00" width="9.2" height="33.40" fill="#e91e63"/><rect x="1363.05" y="323.50" width="9.2" height="37.50" fill="#ff9800"/><rect x="1363.05" y="320.20" width="9.2" height="3.30" fill="#2196f3"/><rect x="1375.16" y="393.70" width="9.2" height="9.10" fill="#880e4f"/><rect x="1375.16" y="358.40" width="9.2" height="35.30" fill="#e91e63"/><rect x="1375.16" y="317.60" width="9.2" height="40.80" fill="#ff9800"/><rect x="1375.16" y="314.30" width="9.2" height="3.30" fill="#2196f3"/><rect x="1387.26" y="397.80" width="9.2" height="5.00" fill="#880e4f"/><rect x="1387.26" y="364.00" width="9.2" height="33.80" fill="#e91e63"/><rect x="1387.26" y="330.00" width="9.2" height="34.00" fill="#ff9800"/><rect x="1387.26" y="326.30" width="9.2" height="3.70" fill="#2196f3"/><rect x="1399.37" y="397.80" width="9.2" height="5.00" fill="#880e4f"/><rect x="1399.37" y="364.00" width="9.2" height="33.80" fill="#e91e63"/><rect x="1399.37" y="330.00" width="9.2" height="34.00" fill="#ff9800"/><rect x="1399.37" y="326.30" width="9.2" height="3.70" fill="#2196f3"/><rect x="1411.47" y="397.80" width="9.2" height="5.00" fill="#880e4f"/><rect x="1411.47" y="364.00" width="9.2" height="33.80" fill="#e91e63"/><rect x="1411.47" y="330.00" width="9.2" height="34.00" fill="#ff9800"/><rect x="1411.47" y="326.30" width="9.2" height="3.70" fill="#2196f3"/><rect x="1423.58" y="397.80" width="9.2" height="5.00" fill="#880e4f"/><rect x="1423.58" y="364.00" width="9.2" height="33.80" fill="#e91e63"/><rect x="1423.58" y="330.00" width="9.2" height="34.00" fill="#ff9800"/><rect x="1423.58" y="326.30" width="9.2" height="3.70" fill="#2196f3"/><rect x="1435.68" y="397.80" width="9.2" height="5.00" fill="#880e4f"/><rect x="1435.68" y="364.00" width="9.2" height="33.80" fill="#e91e63"/><rect x="1435.68" y="330.00" width="9.2" height="34.00" fill="#ff9800"/><rect x="1435.68" y="326.30" width="9.2" height="3.70" fill="#2196f3"/><rect x="1447.79" y="397.80" width="9.2" height="5.00" fill="#880e4f"/><rect x="1447.79" y="364.00" width="9.2" height="33.80" fill="#e91e63"/><rect x="1447.79" y="330.00" width="9.2" height="34.00" fill="#ff9800"/><rect x="1447.79" y="326.30" width="9.2" height="3.70" fill="#2196f3"/><rect x="1459.89" y="397.80" width="9.2" height="5.00" fill="#880e4f"/><rect x="1459.89" y="364.00" width="9.2" height="33.80" fill="#e91e63"/><rect x="1459.89" y="330.00" width="9.2" height="34.00" fill="#ff9800"/><rect x="1459.89" y="326.30" width="9.2" height="3.70" fill="#2196f3"/><rect x="1472.00" y="397.80" width="9.2" height="5.00" fill="#880e4f"/><rect x="1472.00" y="364.00" width="9.2" height="33.80" fill="#e91e63"/><rect x="1472.00" y="331.00" width="9.2" height="33.00" fill="#ff9800"/><rect x="1472.00" y="326.90" width="9.2" height="4.10" fill="#2196f3"/><rect x="1484.10" y="396.90" width="9.2" height="5.90" fill="#880e4f"/><rect x="1484.10" y="361.00" width="9.2" height="35.90" fill="#e91e63"/><rect x="1484.10" y="323.90" width="9.2" height="37.10" fill="#ff9800"/><rect x="1484.10" y="320.20" width="9.2" height="3.70" fill="#2196f3"/><rect x="1496.20" y="396.90" width="9.2" height="5.90" fill="#880e4f"/><rect x="1496.20" y="361.00" width="9.2" height="35.90" fill="#e91e63"/><rect x="1496.20" y="323.90" width="9.2" height="37.10" fill="#ff9800"/><rect x="1496.20" y="320.20" width="9.2" height="3.70" fill="#2196f3"/><rect x="1508.31" y="395.00" width="9.2" height="7.80" fill="#880e4f"/><rect x="1508.31" y="352.90" width="9.2" height="42.10" fill="#e91e63"/><rect x="1508.31" y="297.90" width="9.2" height="55.00" fill="#ff9800"/><rect x="1508.31" y="291.00" width="9.2" height="6.90" fill="#2196f3"/><rect x="1520.41" y="395.00" width="9.2" height="7.80" fill="#880e4f"/><rect x="1520.41" y="352.90" width="9.2" height="42.10" fill="#e91e63"/><rect x="1520.41" y="297.90" width="9.2" height="55.00" fill="#ff9800"/><rect x="1520.41" y="291.00" width="9.2" height="6.90" fill="#2196f3"/><rect x="1532.52" y="395.00" width="9.2" height="7.80" fill="#880e4f"/><rect x="1532.52" y="352.90" width="9.2" height="42.10" fill="#e91e63"/><rect x="1532.52" y="297.90" width="9.2" height="55.00" fill="#ff9800"/><rect x="1532.52" y="291.00" width="9.2" height="6.90" fill="#2196f3"/><rect x="1544.62" y="393.70" width="9.2" height="9.10" fill="#880e4f"/><rect x="1544.62" y="351.00" width="9.2" height="42.70" fill="#e91e63"/><rect x="1544.62" y="294.50" width="9.2" height="56.50" fill="#ff9800"/><rect x="1544.62" y="287.00" width="9.2" height="7.50" fill="#2196f3"/><rect x="1556.73" y="393.70" width="9.2" height="9.10" fill="#880e4f"/><rect x="1556.73" y="351.00" width="9.2" height="42.70" fill="#e91e63"/><rect x="1556.73" y="294.50" width="9.2" height="56.50" fill="#ff9800"/><rect x="1556.73" y="287.00" width="9.2" height="7.50" fill="#2196f3"/><rect x="1568.84" y="393.70" width="9.2" height="9.10" fill="#880e4f"/><rect x="1568.84" y="351.00" width="9.2" height="42.70" fill="#e91e63"/><rect x="1568.84" y="294.50" width="9.2" height="56.50" fill="#ff9800"/><rect x="1568.84" y="287.00" width="9.2" height="7.50" fill="#2196f3"/><rect x="1580.94" y="393.70" width="9.2" height="9.10" fill="#880e4f"/><rect x="1580.94" y="351.00" width="9.2" height="42.70" fill="#e91e63"/><rect x="1580.94" y="294.50" width="9.2" height="56.50" fill="#ff9800"/><rect x="1580.94" y="287.00" width="9.2" height="7.50" fill="#2196f3"/><rect x="1593.05" y="393.70" width="9.2" height="9.10" fill="#880e4f"/><rect x="1593.05" y="351.00" width="9.2" height="42.70" fill="#e91e63"/><rect x="1593.05" y="294.50" width="9.2" height="56.50" fill="#ff9800"/><rect x="1593.05" y="287.00" width="9.2" height="7.50" fill="#2196f3"/><rect x="1605.15" y="393.70" width="9.2" height="9.10" fill="#880e4f"/><rect x="1605.15" y="351.00" width="9.2" height="42.70" fill="#e91e63"/><rect x="1605.15" y="294.50" width="9.2" height="56.50" fill="#ff9800"/><rect x="1605.15" y="287.00" width="9.2" height="7.50" fill="#2196f3"/><rect x="1617.26" y="393.70" width="9.2" height="9.10" fill="#880e4f"/><rect x="1617.26" y="351.00" width="9.2" height="42.70" fill="#e91e63"/><rect x="1617.26" y="294.50" width="9.2" height="56.50" fill="#ff9800"/><rect x="1617.26" y="287.00" width="9.2" height="7.50" fill="#2196f3"/><rect x="1629.36" y="393.70" width="9.2" height="9.10" fill="#880e4f"/><rect x="1629.36" y="351.80" width="9.2" height="41.90" fill="#e91e63"/><rect x="1629.36" y="295.30" width="9.2" height="56.50" fill="#ff9800"/><rect x="1629.36" y="287.90" width="9.2" height="7.40" fill="#2196f3"/><rect x="1641.47" y="393.70" width="9.2" height="9.10" fill="#880e4f"/><rect x="1641.47" y="351.80" width="9.2" height="41.90" fill="#e91e63"/><rect x="1641.47" y="295.30" width="9.2" height="56.50" fill="#ff9800"/><rect x="1641.47" y="287.90" width="9.2" height="7.40" fill="#2196f3"/><rect x="1653.57" y="393.70" width="9.2" height="9.10" fill="#880e4f"/><rect x="1653.57" y="350.60" width="9.2" height="43.10" fill="#e91e63"/><rect x="1653.57" y="293.80" width="9.2" height="56.80" fill="#ff9800"/><rect x="1653.57" y="249.70" width="9.2" height="44.10" fill="#2196f3"/><rect x="1665.68" y="393.70" width="9.2" height="9.10" fill="#880e4f"/><rect x="1665.68" y="325.40" width="9.2" height="68.30" fill="#e91e63"/><rect x="1665.68" y="257.10" width="9.2" height="68.30" fill="#ff9800"/><rect x="1665.68" y="249.30" width="9.2" height="7.80" fill="#2196f3"/><rect x="1677.78" y="393.70" width="9.2" height="9.10" fill="#880e4f"/><rect x="1677.78" y="346.70" width="9.2" height="47.00" fill="#e91e63"/><rect x="1677.78" y="287.30" width="9.2" height="59.40" fill="#ff9800"/><rect x="1677.78" y="279.90" width="9.2" height="7.40" fill="#2196f3"/><rect x="1689.89" y="393.70" width="9.2" height="9.10" fill="#880e4f"/><rect x="1689.89" y="346.70" width="9.2" height="47.00" fill="#e91e63"/><rect x="1689.89" y="287.30" width="9.2" height="59.40" fill="#ff9800"/><rect x="1689.89" y="279.90" width="9.2" height="7.40" fill="#2196f3"/><rect x="1701.99" y="393.70" width="9.2" height="9.10" fill="#880e4f"/><rect x="1701.99" y="348.60" width="9.2" height="45.10" fill="#e91e63"/><rect x="1701.99" y="289.20" width="9.2" height="59.40" fill="#ff9800"/><rect x="1701.99" y="282.70" width="9.2" height="6.50" fill="#2196f3"/><rect x="1714.10" y="393.70" width="9.2" height="9.10" fill="#880e4f"/><rect x="1714.10" y="347.30" width="9.2" height="46.40" fill="#e91e63"/><rect x="1714.10" y="287.90" width="9.2" height="59.40" fill="#ff9800"/><rect x="1714.10" y="279.90" width="9.2" height="8.00" fill="#2196f3"/><rect x="1726.20" y="390.70" width="9.2" height="12.10" fill="#880e4f"/><rect x="1726.20" y="341.70" width="9.2" height="49.00" fill="#e91e63"/><rect x="1726.20" y="279.90" width="9.2" height="61.80" fill="#ff9800"/><rect x="1726.20" y="271.60" width="9.2" height="8.30" fill="#2196f3"/><rect x="1738.31" y="390.70" width="9.2" height="12.10" fill="#880e4f"/><rect x="1738.31" y="344.00" width="9.2" height="46.70" fill="#e91e63"/><rect x="1738.31" y="281.80" width="9.2" height="62.20" fill="#ff9800"/><rect x="1738.31" y="273.80" width="9.2" height="8.00" fill="#2196f3"/><rect x="1750.41" y="390.70" width="9.2" height="12.10" fill="#880e4f"/><rect x="1750.41" y="344.90" width="9.2" height="45.80" fill="#e91e63"/><rect x="1750.41" y="282.30" width="9.2" height="62.60" fill="#ff9800"/><rect x="1750.41" y="274.30" width="9.2" height="8.00" fill="#2196f3"/><rect x="1762.52" y="390.70" width="9.2" height="12.10" fill="#880e4f"/><rect x="1762.52" y="344.90" width="9.2" height="45.80" fill="#e91e63"/><rect x="1762.52" y="282.30" width="9.2" height="62.60" fill="#ff9800"/><rect x="1762.52" y="274.30" width="9.2" height="8.00" fill="#2196f3"/><rect x="1774.62" y="390.70" width="9.2" height="12.10" fill="#880e4f"/><rect x="1774.62" y="344.90" width="9.2" height="45.80" fill="#e91e63"/><rect x="1774.62" y="282.30" width="9.2" height="62.60" fill="#ff9800"/><rect x="1774.62" y="274.30" width="9.2" height="8.00" fill="#2196f3"/><rect x="1786.72" y="390.70" width="9.2" height="12.10" fill="#880e4f"/><rect x="1786.72" y="344.90" width="9.2" height="45.80" fill="#e91e63"/><rect x="1786.72" y="282.30" width="9.2" height="62.60" fill="#ff9800"/><rect x="1786.72" y="274.30" width="9.2" height="8.00" fill="#2196f3"/><rect x="1798.83" y="389.40" width="9.2" height="13.40" fill="#880e4f"/><rect x="1798.83" y="333.20" width="9.2" height="56.20" fill="#e91e63"/><rect x="1798.83" y="261.90" width="9.2" height="71.30" fill="#ff9800"/><rect x="1798.83" y="252.10" width="9.2" height="9.80" fill="#2196f3"/><rect x="1810.93" y="389.40" width="9.2" height="13.40" fill="#880e4f"/><rect x="1810.93" y="333.20" width="9.2" height="56.20" fill="#e91e63"/><rect x="1810.93" y="261.90" width="9.2" height="71.30" fill="#ff9800"/><rect x="1810.93" y="252.10" width="9.2" height="9.80" fill="#2196f3"/><rect x="1823.04" y="389.40" width="9.2" height="13.40" fill="#880e4f"/><rect x="1823.04" y="333.20" width="9.2" height="56.20" fill="#e91e63"/><rect x="1823.04" y="261.90" width="9.2" height="71.30" fill="#ff9800"/><rect x="1823.04" y="252.10" width="9.2" height="9.80" fill="#2196f3"/><rect x="1835.14" y="389.40" width="9.2" height="13.40" fill="#880e4f"/><rect x="1835.14" y="333.20" width="9.2" height="56.20" fill="#e91e63"/><rect x="1835.14" y="261.90" width="9.2" height="71.30" fill="#ff9800"/><rect x="1835.14" y="252.10" width="9.2" height="9.80" fill="#2196f3"/></svg>
<div style="position:absolute;left:710.82px;width:200px;text-align:center;top:414.19px;font-size:11px;line-height:11px;color:#9b9b9b;font-weight:400;white-space:nowrap;">Aug 01</div>
<div style="position:absolute;left:795.55px;width:200px;text-align:center;top:414.19px;font-size:11px;line-height:11px;color:#9b9b9b;font-weight:400;white-space:nowrap;">Aug 08</div>
<div style="position:absolute;left:892.39px;width:200px;text-align:center;top:414.19px;font-size:11px;line-height:11px;color:#9b9b9b;font-weight:400;white-space:nowrap;">Aug 16</div>
<div style="position:absolute;left:989.24px;width:200px;text-align:center;top:414.19px;font-size:11px;line-height:11px;color:#9b9b9b;font-weight:400;white-space:nowrap;">Aug 24</div>
<div style="position:absolute;left:1086.08px;width:200px;text-align:center;top:414.19px;font-size:11px;line-height:11px;color:#9b9b9b;font-weight:400;white-space:nowrap;">Sep 01</div>
<div style="position:absolute;left:1170.81px;width:200px;text-align:center;top:414.19px;font-size:11px;line-height:11px;color:#9b9b9b;font-weight:400;white-space:nowrap;">Sep 08</div>
<div style="position:absolute;left:1267.65px;width:200px;text-align:center;top:414.19px;font-size:11px;line-height:11px;color:#9b9b9b;font-weight:400;white-space:nowrap;">Sep 16</div>
<div style="position:absolute;left:1352.38px;width:200px;text-align:center;top:414.19px;font-size:11px;line-height:11px;color:#9b9b9b;font-weight:400;white-space:nowrap;">Sep 23</div>
<div style="position:absolute;left:1449.22px;width:200px;text-align:center;top:414.19px;font-size:11px;line-height:11px;color:#9b9b9b;font-weight:400;white-space:nowrap;">Oct 01</div>
<div style="position:absolute;left:1533.96px;width:200px;text-align:center;top:414.19px;font-size:11px;line-height:11px;color:#9b9b9b;font-weight:400;white-space:nowrap;">Oct 08</div>
<div style="position:absolute;left:1630.80px;width:200px;text-align:center;top:414.19px;font-size:11px;line-height:11px;color:#9b9b9b;font-weight:400;white-space:nowrap;">Oct 16</div>
<div style="position:absolute;left:1727.64px;width:200px;text-align:center;top:414.19px;font-size:11px;line-height:11px;color:#9b9b9b;font-weight:400;white-space:nowrap;">Oct 24</div>
<div style="position:absolute;left:736px;top:450px;width:10px;height:10px;background:#880e4f"></div>
<div style="position:absolute;left:750.40px;top:448.69px;font-size:11px;line-height:11px;color:#333;font-weight:400;white-space:nowrap;">Critical</div>
<div style="position:absolute;left:796.4px;top:450px;width:10px;height:10px;background:#e91e63"></div>
<div style="position:absolute;left:810.50px;top:448.69px;font-size:11px;line-height:11px;color:#333;font-weight:400;white-space:nowrap;">High</div>
<div style="position:absolute;left:844.7px;top:450px;width:10px;height:10px;background:#ff9800"></div>
<div style="position:absolute;left:858.50px;top:448.69px;font-size:11px;line-height:11px;color:#333;font-weight:400;white-space:nowrap;">Medium</div>
<div style="position:absolute;left:909.6px;top:450px;width:10px;height:10px;background:#2196f3"></div>
<div style="position:absolute;left:924.00px;top:448.69px;font-size:11px;line-height:11px;color:#333;font-weight:400;white-space:nowrap;">Low</div>
<div style="position:absolute;left:320.00px;top:520.22px;font-size:19px;line-height:19px;color:#2b2b2b;font-weight:400;white-space:nowrap;letter-spacing:-0.495px;">Sicherheitslücken</div>
<div style="position:absolute;left:320.00px;top:545.14px;font-size:12px;line-height:12px;color:#6e6e6e;font-weight:400;white-space:nowrap;letter-spacing:-0.061px;">Erhalten Sie eine Einschätzung zu den am meisten gefährdeten Assets (Hosts, Endpunkte).</div>
<div style="position:absolute;left:320px;top:575px;width:774px;height:366px;background:#fff;border:1px solid #dfdfdf;box-sizing:border-box"></div><div style="position:absolute;left:320px;top:630px;width:774px;height:1px;background:#dcdcdc"></div>
<svg style="position:absolute;left:341px;top:587.5px" width="17" height="17" viewBox="0 0 24 24"><g><path d="M20 8h-2.81c-.45-.78-1.07-1.45-1.82-1.96L17 4.41 15.59 3l-2.17 2.17C12.96 5.06 12.49 5 12 5s-.96.06-1.41.17L8.41 3 7 4.41l1.62 1.63C7.88 6.55 7.26 7.22 6.81 8H4v2h2.09c-.05.33-.09.66-.09 1v1H4v2h2v1c0 .34.04.67.09 1H4v2h2.81c1.04 1.79 2.97 3 5.19 3s4.15-1.21 5.19-3H20v-2h-2.09c.05-.33.09-.66.09-1v-1h2v-2h-2v-1c0-.34-.04-.67-.09-1H20V8zm-4 4v3c0 .22-.02.44-.05.65l-.1.65-.37.65c-.72 1.24-2.04 2.05-3.48 2.05s-2.76-.81-3.48-2.05l-.37-.65-.1-.65C8.02 15.44 8 15.22 8 15v-4c0-.23.02-.45.05-.65l.1-.65.37-.65c.3-.52.72-.97 1.21-1.31l.57-.39.74-.18c.31-.08.63-.12.96-.12.32 0 .65.04.95.12l.68.16.61.42c.5.34.91.78 1.21 1.31l.38.65.1.65c.03.2.05.42.05.64v1zm-6 2h4v2h-4zm0-4h4v2h-4z" fill="#858585"/></g></svg>
<div style="position:absolute;left:362.70px;top:589.80px;font-size:13px;line-height:13px;color:#222;font-weight:400;white-space:nowrap;letter-spacing:-0.077px;">Scatterplot</div>
<div style="position:absolute;left:362.70px;top:609.69px;font-size:11px;line-height:11px;color:#9a9a9a;font-weight:400;white-space:nowrap;letter-spacing:-0.113px;">Gegenüberstellung der Anzahl Sicherheitslücken und Risikoscore des Assets.</div>
<div style="position:absolute;right:1510.00px;top:652.69px;font-size:11px;line-height:11px;color:#9b9b9b;font-weight:400;white-space:nowrap;">750</div>
<div style="position:absolute;right:1510.00px;top:739.69px;font-size:11px;line-height:11px;color:#9b9b9b;font-weight:400;white-space:nowrap;">500</div>
<div style="position:absolute;right:1510.00px;top:826.39px;font-size:11px;line-height:11px;color:#9b9b9b;font-weight:400;white-space:nowrap;">250</div>
<div style="position:absolute;right:1510.00px;top:913.19px;font-size:11px;line-height:11px;color:#9b9b9b;font-weight:400;white-space:nowrap;">0</div>
<div style="position:absolute;left:294.5px;top:789.6px;width:100px;height:12px;transform:rotate(-90deg);text-align:center;font-size:11px;line-height:12px;color:#666;white-space:nowrap;letter-spacing:-0.1px">Sicherheitslücken</div>
<svg style="position:absolute;left:0;top:0;overflow:visible" width="1" height="1"><line x1="460.5" y1="658" x2="460.5" y2="916" stroke="#f1f1f1" stroke-width="1"/><line x1="530.5" y1="658" x2="530.5" y2="916" stroke="#f1f1f1" stroke-width="1"/><line x1="600.5" y1="658" x2="600.5" y2="916" stroke="#f1f1f1" stroke-width="1"/><line x1="671.5" y1="658" x2="671.5" y2="916" stroke="#f1f1f1" stroke-width="1"/><line x1="741.5" y1="658" x2="741.5" y2="916" stroke="#f1f1f1" stroke-width="1"/><line x1="811.5" y1="658" x2="811.5" y2="916" stroke="#f1f1f1" stroke-width="1"/><line x1="881.5" y1="658" x2="881.5" y2="916" stroke="#f1f1f1" stroke-width="1"/><line x1="952.5" y1="658" x2="952.5" y2="916" stroke="#f1f1f1" stroke-width="1"/><line x1="1022.5" y1="658" x2="1022.5" y2="916" stroke="#f1f1f1" stroke-width="1"/><circle cx="392.9" cy="918.7" r="6.0" fill="#2196f3"/><circle cx="393.6" cy="918.7" r="6.0" fill="#2196f3"/><circle cx="394.3" cy="918.6" r="6.0" fill="#2196f3"/><circle cx="395.0" cy="918.6" r="6.0" fill="#2196f3"/><circle cx="395.9" cy="918.0" r="6.0" fill="#2196f3"/><circle cx="396.6" cy="918.1" r="6.0" fill="#2196f3"/><circle cx="398.1" cy="916.0" r="6.0" fill="#2196f3"/><circle cx="398.5" cy="916.6" r="6.0" fill="#2196f3"/><circle cx="398.9" cy="917.3" r="6.0" fill="#2196f3"/><circle cx="399.9" cy="916.5" r="6.0" fill="#2196f3"/><circle cx="400.5" cy="916.7" r="6.0" fill="#2196f3"/><circle cx="401.9" cy="914.8" r="6.0" fill="#2196f3"/><circle cx="402.4" cy="915.3" r="6.0" fill="#2196f3"/><circle cx="403.3" cy="914.6" r="6.0" fill="#2196f3"/><circle cx="403.9" cy="914.9" r="6.0" fill="#2196f3"/><circle cx="404.6" cy="914.7" r="6.0" fill="#2196f3"/><circle cx="405.9" cy="913.3" r="6.0" fill="#2196f3"/><circle cx="406.5" cy="913.4" r="6.0" fill="#2196f3"/><circle cx="407.2" cy="913.2" r="6.0" fill="#2196f3"/><circle cx="407.5" cy="914.2" r="6.0" fill="#2196f3"/><circle cx="408.3" cy="913.6" r="6.0" fill="#2196f3"/><circle cx="409.6" cy="912.1" r="6.0" fill="#2196f3"/><circle cx="409.9" cy="913.1" r="6.0" fill="#2196f3"/><circle cx="411.2" cy="911.5" r="6.0" fill="#2196f3"/><circle cx="411.5" cy="912.2" r="6.0" fill="#2196f3"/><circle cx="412.7" cy="910.9" r="6.0" fill="#2196f3"/><circle cx="413.6" cy="910.3" r="6.0" fill="#2196f3"/><circle cx="413.6" cy="911.8" r="6.0" fill="#2196f3"/><circle cx="414.9" cy="910.2" r="6.0" fill="#2196f3"/><circle cx="415.7" cy="909.9" r="6.0" fill="#2196f3"/><circle cx="415.8" cy="911.1" r="6.0" fill="#2196f3"/><circle cx="416.7" cy="910.6" r="6.0" fill="#2196f3"/><circle cx="417.9" cy="909.1" r="6.0" fill="#2196f3"/><circle cx="418.1" cy="910.1" r="6.0" fill="#2196f3"/><circle cx="419.2" cy="909.0" r="6.0" fill="#2196f3"/><circle cx="419.9" cy="909.0" r="6.0" fill="#2196f3"/><circle cx="421.0" cy="907.7" r="6.0" fill="#2196f3"/><circle cx="421.2" cy="908.9" r="6.0" fill="#2196f3"/><circle cx="422.2" cy="908.0" r="6.0" fill="#2196f3"/><circle cx="422.7" cy="908.3" r="6.0" fill="#2196f3"/><circle cx="423.5" cy="907.8" r="6.0" fill="#2196f3"/><circle cx="424.7" cy="906.3" r="6.0" fill="#2196f3"/><circle cx="425.5" cy="906.1" r="6.0" fill="#2196f3"/><circle cx="426.4" cy="905.4" r="6.0" fill="#2196f3"/><circle cx="427.1" cy="905.0" r="6.0" fill="#2196f3"/><circle cx="428.0" cy="904.5" r="6.0" fill="#2196f3"/><circle cx="428.5" cy="904.7" r="6.0" fill="#2196f3"/><circle cx="429.0" cy="904.9" r="6.0" fill="#2196f3"/><circle cx="430.3" cy="903.4" r="6.0" fill="#2196f3"/><circle cx="430.5" cy="904.4" r="6.0" fill="#2196f3"/><circle cx="431.5" cy="903.4" r="6.0" fill="#2196f3"/><circle cx="432.3" cy="903.0" r="6.0" fill="#2196f3"/><circle cx="432.6" cy="903.7" r="6.0" fill="#2196f3"/><circle cx="433.6" cy="902.7" r="6.0" fill="#2196f3"/><circle cx="434.5" cy="902.0" r="6.0" fill="#2196f3"/><circle cx="435.1" cy="902.0" r="6.0" fill="#2196f3"/><circle cx="435.7" cy="902.1" r="6.0" fill="#2196f3"/><circle cx="436.9" cy="900.4" r="6.0" fill="#2196f3"/><circle cx="437.0" cy="901.9" r="6.0" fill="#2196f3"/><circle cx="438.5" cy="899.7" r="6.0" fill="#2196f3"/><circle cx="438.6" cy="900.8" r="6.0" fill="#2196f3"/><circle cx="439.3" cy="900.6" r="6.0" fill="#2196f3"/><circle cx="440.7" cy="898.6" r="6.0" fill="#2196f3"/><circle cx="440.8" cy="899.8" r="6.0" fill="#2196f3"/><circle cx="441.9" cy="898.6" r="6.0" fill="#2196f3"/><circle cx="442.5" cy="898.6" r="6.0" fill="#2196f3"/><circle cx="443.7" cy="897.1" r="6.0" fill="#2196f3"/><circle cx="444.4" cy="896.8" r="6.0" fill="#2196f3"/><circle cx="445.0" cy="896.7" r="6.0" fill="#2196f3"/><circle cx="445.1" cy="897.9" r="6.0" fill="#2196f3"/><circle cx="446.5" cy="896.0" r="6.0" fill="#2196f3"/><circle cx="446.7" cy="896.8" r="6.0" fill="#2196f3"/><circle cx="447.3" cy="896.7" r="6.0" fill="#2196f3"/><circle cx="448.1" cy="896.4" r="6.0" fill="#2196f3"/><circle cx="449.3" cy="894.8" r="6.0" fill="#2196f3"/><circle cx="450.0" cy="894.4" r="6.0" fill="#2196f3"/><circle cx="450.6" cy="894.4" r="6.0" fill="#2196f3"/><circle cx="451.1" cy="894.5" r="6.0" fill="#2196f3"/><circle cx="452.4" cy="892.8" r="6.0" fill="#2196f3"/><circle cx="452.6" cy="893.7" r="6.0" fill="#2196f3"/><circle cx="469.5" cy="884.5" r="6.3" fill="#ff9800" stroke="#4a8fc4" stroke-width="1.3"/><circle cx="467.2" cy="888" r="6.3" fill="#2196f3" stroke="#2196f3" stroke-width="1.3"/><circle cx="524.7" cy="864.8" r="6.3" fill="#ff9800" stroke="#4a8fc4" stroke-width="1.3"/><circle cx="520.5" cy="868.5" r="6.3" fill="#ff9800" stroke="#4a8fc4" stroke-width="1.3"/><circle cx="511.5" cy="872.7" r="6.3" fill="#ff9800" stroke="#4a8fc4" stroke-width="1.3"/><circle cx="506.2" cy="873.8" r="6.3" fill="#ff9800" stroke="#4a8fc4" stroke-width="1.3"/><circle cx="500.9" cy="874.8" r="6.3" fill="#ff9800" stroke="#4a8fc4" stroke-width="1.3"/><circle cx="550.6" cy="854.8" r="6.3" fill="#ff9800" stroke="#4a8fc4" stroke-width="1.3"/><circle cx="549.5" cy="858" r="6.3" fill="#ff9800" stroke="#4a8fc4" stroke-width="1.3"/><circle cx="547.5" cy="860.5" r="6.3" fill="#ff9800" stroke="#4a8fc4" stroke-width="1.3"/><circle cx="544.2" cy="864.3" r="6.3" fill="#ff9800" stroke="#4a8fc4" stroke-width="1.3"/><circle cx="675.3" cy="819" r="6.3" fill="#ff9800" stroke="#4a8fc4" stroke-width="1.3"/><circle cx="763.2" cy="747.5" r="6.3" fill="#e91e63" stroke="#5a57b0" stroke-width="1.3"/><circle cx="1060.4" cy="683.6" r="6.3" fill="#e91e63" stroke="#5a57b0" stroke-width="1.3"/></svg>
<div style="position:absolute;left:1110px;top:575px;width:773px;height:366px;background:#fff;border:1px solid #dfdfdf;box-sizing:border-box"></div><div style="position:absolute;left:1110px;top:630px;width:773px;height:1px;background:#dcdcdc"></div>
<svg style="position:absolute;left:1131px;top:587.5px" width="17" height="17" viewBox="0 0 24 24"><g><path d="M20 8h-2.81c-.45-.78-1.07-1.45-1.82-1.96L17 4.41 15.59 3l-2.17 2.17C12.96 5.06 12.49 5 12 5s-.96.06-1.41.17L8.41 3 7 4.41l1.62 1.63C7.88 6.55 7.26 7.22 6.81 8H4v2h2.09c-.05.33-.09.66-.09 1v1H4v2h2v1c0 .34.04.67.09 1H4v2h2.81c1.04 1.79 2.97 3 5.19 3s4.15-1.21 5.19-3H20v-2h-2.09c.05-.33.09-.66.09-1v-1h2v-2h-2v-1c0-.34-.04-.67-.09-1H20V8zm-4 4v3c0 .22-.02.44-.05.65l-.1.65-.37.65c-.72 1.24-2.04 2.05-3.48 2.05s-2.76-.81-3.48-2.05l-.37-.65-.1-.65C8.02 15.44 8 15.22 8 15v-4c0-.23.02-.45.05-.65l.1-.65.37-.65c.3-.52.72-.97 1.21-1.31l.57-.39.74-.18c.31-.08.63-.12.96-.12.32 0 .65.04.95.12l.68.16.61.42c.5.34.91.78 1.21 1.31l.38.65.1.65c.03.2.05.42.05.64v1zm-6 2h4v2h-4zm0-4h4v2h-4z" fill="#858585"/></g></svg>
<div style="position:absolute;left:1152.00px;top:589.80px;font-size:13px;line-height:13px;color:#222;font-weight:400;white-space:nowrap;letter-spacing:-0.095px;">Risikowert</div>
<div style="position:absolute;left:1152.00px;top:609.69px;font-size:11px;line-height:11px;color:#9a9a9a;font-weight:400;white-space:nowrap;letter-spacing:-0.052px;">Am stärksten gefährdete Assets gemäß Risikoscore.</div>
<div style="position:absolute;left:1871px;top:632px;width:10px;height:176px;background:#ececec"></div>
<div style="position:absolute;left:1162.40px;top:654.69px;font-size:11px;line-height:11px;color:#9e9e9e;font-weight:400;white-space:nowrap;letter-spacing:-0.348px;">REFERENZ</div>
<div style="position:absolute;left:1323.70px;top:654.69px;font-size:11px;line-height:11px;color:#9e9e9e;font-weight:400;white-space:nowrap;letter-spacing:-0.093px;">SICHERHEITSLÜCKEN</div>
<div style="position:absolute;left:1552.70px;top:654.69px;font-size:11px;line-height:11px;color:#9e9e9e;font-weight:400;white-space:nowrap;letter-spacing:-0.277px;">RISIKOWERT</div>
<div style="position:absolute;left:1132px;top:679px;width:716px;height:1px;background:#ececec"></div>
<div style="position:absolute;left:1161px;top:679px;width:2px;height:1px;background:#fff"></div>
<div style="position:absolute;left:1321px;top:679px;width:2px;height:1px;background:#fff"></div>
<div style="position:absolute;left:1548px;top:679px;width:2px;height:1px;background:#fff"></div>
<div style="position:absolute;left:1697px;top:679px;width:2px;height:1px;background:#fff"></div>
<div style="position:absolute;left:1132px;top:712px;width:716px;height:1px;background:#ececec"></div>
<div style="position:absolute;left:1161px;top:712px;width:2px;height:1px;background:#fff"></div>
<div style="position:absolute;left:1321px;top:712px;width:2px;height:1px;background:#fff"></div>
<div style="position:absolute;left:1548px;top:712px;width:2px;height:1px;background:#fff"></div>
<div style="position:absolute;left:1697px;top:712px;width:2px;height:1px;background:#fff"></div>
<div style="position:absolute;left:1132px;top:745px;width:716px;height:1px;background:#ececec"></div>
<div style="position:absolute;left:1161px;top:745px;width:2px;height:1px;background:#fff"></div>
<div style="position:absolute;left:1321px;top:745px;width:2px;height:1px;background:#fff"></div>
<div style="position:absolute;left:1548px;top:745px;width:2px;height:1px;background:#fff"></div>
<div style="position:absolute;left:1697px;top:745px;width:2px;height:1px;background:#fff"></div>
<div style="position:absolute;left:1132px;top:778px;width:716px;height:1px;background:#ececec"></div>
<div style="position:absolute;left:1161px;top:778px;width:2px;height:1px;background:#fff"></div>
<div style="position:absolute;left:1321px;top:778px;width:2px;height:1px;background:#fff"></div>
<div style="position:absolute;left:1548px;top:778px;width:2px;height:1px;background:#fff"></div>
<div style="position:absolute;left:1697px;top:778px;width:2px;height:1px;background:#fff"></div>
<div style="position:absolute;left:1132px;top:811px;width:716px;height:1px;background:#ececec"></div>
<div style="position:absolute;left:1161px;top:811px;width:2px;height:1px;background:#fff"></div>
<div style="position:absolute;left:1321px;top:811px;width:2px;height:1px;background:#fff"></div>
<div style="position:absolute;left:1548px;top:811px;width:2px;height:1px;background:#fff"></div>
<div style="position:absolute;left:1697px;top:811px;width:2px;height:1px;background:#fff"></div>
<div style="position:absolute;left:1132px;top:844px;width:716px;height:1px;background:#ececec"></div>
<div style="position:absolute;left:1161px;top:844px;width:2px;height:1px;background:#fff"></div>
<div style="position:absolute;left:1321px;top:844px;width:2px;height:1px;background:#fff"></div>
<div style="position:absolute;left:1548px;top:844px;width:2px;height:1px;background:#fff"></div>
<div style="position:absolute;left:1697px;top:844px;width:2px;height:1px;background:#fff"></div>
<div style="position:absolute;left:1132px;top:877px;width:716px;height:1px;background:#ececec"></div>
<div style="position:absolute;left:1161px;top:877px;width:2px;height:1px;background:#fff"></div>
<div style="position:absolute;left:1321px;top:877px;width:2px;height:1px;background:#fff"></div>
<div style="position:absolute;left:1548px;top:877px;width:2px;height:1px;background:#fff"></div>
<div style="position:absolute;left:1697px;top:877px;width:2px;height:1px;background:#fff"></div>
<div style="position:absolute;left:1132px;top:910px;width:716px;height:1px;background:#ececec"></div>
<div style="position:absolute;left:1161px;top:910px;width:2px;height:1px;background:#fff"></div>
<div style="position:absolute;left:1321px;top:910px;width:2px;height:1px;background:#fff"></div>
<div style="position:absolute;left:1548px;top:910px;width:2px;height:1px;background:#fff"></div>
<div style="position:absolute;left:1697px;top:910px;width:2px;height:1px;background:#fff"></div>
<svg style="position:absolute;left:1132px;top:686.9px" width="19" height="19" viewBox="0 0 24 24"><g><path d="M4 6h18V4H4c-1.1 0-2 .9-2 2v11H0v3h14v-3H4V6zm19 2h-6c-.55 0-1 .45-1 1v10c0 .55.45 1 1 1h6c.55 0 1-.45 1-1V9c0-.55-.45-1-1-1zm-1 9h-4v-7h4v7z" fill="#3d3d3d"/></g></svg>
<svg style="position:absolute;left:0;top:0;overflow:visible;filter:blur(0.45px)" width="1" height="1"><rect x="1161.20" y="688.80" width="4.95" height="4.95" fill="#d5d5d5"/><rect x="1166.15" y="688.80" width="4.95" height="4.95" fill="#c8c8c8"/><rect x="1171.10" y="688.80" width="4.95" height="4.95" fill="#8e8e8e"/><rect x="1176.05" y="688.80" width="4.95" height="4.95" fill="#f4f4f4"/><rect x="1181.00" y="688.80" width="4.95" height="4.95" fill="#9a9a9a"/><rect x="1185.95" y="688.80" width="4.95" height="4.95" fill="#bdbdbd"/><rect x="1190.90" y="688.80" width="4.95" height="4.95" fill="#c0c0c0"/><rect x="1195.85" y="688.80" width="4.95" height="4.95" fill="#c5c5c5"/><rect x="1200.80" y="688.80" width="4.95" height="4.95" fill="#a8a8a8"/><rect x="1205.75" y="688.80" width="4.95" height="4.95" fill="#b0b0b0"/><rect x="1161.20" y="693.75" width="4.95" height="4.95" fill="#e8e8e8"/><rect x="1166.15" y="693.75" width="4.95" height="4.95" fill="#c8c8c8"/><rect x="1171.10" y="693.75" width="4.95" height="4.95" fill="#b5b5b5"/><rect x="1176.05" y="693.75" width="4.95" height="4.95" fill="#d8d8d8"/><rect x="1181.00" y="693.75" width="4.95" height="4.95" fill="#a9a9a9"/><rect x="1185.95" y="693.75" width="4.95" height="4.95" fill="#c0c0c0"/><rect x="1190.90" y="693.75" width="4.95" height="4.95" fill="#c5c5c5"/><rect x="1195.85" y="693.75" width="4.95" height="4.95" fill="#cbcbcb"/><rect x="1200.80" y="693.75" width="4.95" height="4.95" fill="#b8b8b8"/><rect x="1205.75" y="693.75" width="4.95" height="4.95" fill="#c5c5c5"/></svg>
<div style="position:absolute;left:1323.70px;top:688.99px;font-size:11px;line-height:11px;color:#333;font-weight:400;white-space:nowrap;">676</div>
<div style="position:absolute;left:1552.70px;top:688.99px;font-size:11px;line-height:11px;color:#333;font-weight:400;white-space:nowrap;">4773</div>
<div style="position:absolute;left:1699px;top:689.8px;width:150px;height:10px;background:#fbfbfb"></div>
<div style="position:absolute;left:1699px;top:689.8px;width:150px;height:10px;background:#e91e63"></div>
<svg style="position:absolute;left:1132px;top:719.9px" width="19" height="19" viewBox="0 0 24 24"><g><path d="M4 6h18V4H4c-1.1 0-2 .9-2 2v11H0v3h14v-3H4V6zm19 2h-6c-.55 0-1 .45-1 1v10c0 .55.45 1 1 1h6c.55 0 1-.45 1-1V9c0-.55-.45-1-1-1zm-1 9h-4v-7h4v7z" fill="#3d3d3d"/></g></svg>
<svg style="position:absolute;left:0;top:0;overflow:visible;filter:blur(0.45px)" width="1" height="1"><rect x="1161.20" y="718.90" width="4.95" height="4.95" fill="#f8f8f8"/><rect x="1166.15" y="718.90" width="4.95" height="4.95" fill="#f8f8f8"/><rect x="1171.10" y="718.90" width="4.95" height="4.95" fill="#d8d8d8"/><rect x="1176.05" y="718.90" width="4.95" height="4.95" fill="#f8f8f8"/><rect x="1181.00" y="718.90" width="4.95" height="4.95" fill="#f8f8f8"/><rect x="1185.95" y="718.90" width="4.95" height="4.95" fill="#f8f8f8"/><rect x="1190.90" y="718.90" width="4.95" height="4.95" fill="#f8f8f8"/><rect x="1195.85" y="718.90" width="4.95" height="4.95" fill="#f8f8f8"/><rect x="1200.80" y="718.90" width="4.95" height="4.95" fill="#f8f8f8"/><rect x="1205.75" y="718.90" width="4.95" height="4.95" fill="#f8f8f8"/><rect x="1210.70" y="718.90" width="4.95" height="4.95" fill="#d8d8d8"/><rect x="1215.65" y="718.90" width="4.95" height="4.95" fill="#d8d8d8"/><rect x="1220.60" y="718.90" width="4.95" height="4.95" fill="#f8f8f8"/><rect x="1225.55" y="718.90" width="4.95" height="4.95" fill="#f8f8f8"/><rect x="1230.50" y="718.90" width="4.95" height="4.95" fill="#f8f8f8"/><rect x="1235.45" y="718.90" width="4.95" height="4.95" fill="#f8f8f8"/><rect x="1161.20" y="723.85" width="4.95" height="4.95" fill="#c4c4c4"/><rect x="1166.15" y="723.85" width="4.95" height="4.95" fill="#c4c4c4"/><rect x="1171.10" y="723.85" width="4.95" height="4.95" fill="#9e9e9e"/><rect x="1176.05" y="723.85" width="4.95" height="4.95" fill="#d8d8d8"/><rect x="1181.00" y="723.85" width="4.95" height="4.95" fill="#a0a0a0"/><rect x="1185.95" y="723.85" width="4.95" height="4.95" fill="#c0c0c0"/><rect x="1190.90" y="723.85" width="4.95" height="4.95" fill="#a8a8a8"/><rect x="1195.85" y="723.85" width="4.95" height="4.95" fill="#d0d0d0"/><rect x="1200.80" y="723.85" width="4.95" height="4.95" fill="#b2b2b2"/><rect x="1205.75" y="723.85" width="4.95" height="4.95" fill="#c8c8c8"/><rect x="1210.70" y="723.85" width="4.95" height="4.95" fill="#c8c8c8"/><rect x="1215.65" y="723.85" width="4.95" height="4.95" fill="#b8b8b8"/><rect x="1220.60" y="723.85" width="4.95" height="4.95" fill="#cccccc"/><rect x="1225.55" y="723.85" width="4.95" height="4.95" fill="#c8c8c8"/><rect x="1230.50" y="723.85" width="4.95" height="4.95" fill="#c5c5c5"/><rect x="1235.45" y="723.85" width="4.95" height="4.95" fill="#c0c0c0"/><rect x="1161.20" y="728.80" width="4.95" height="4.95" fill="#f0f0f0"/><rect x="1166.15" y="728.80" width="4.95" height="4.95" fill="#f0f0f0"/><rect x="1171.10" y="728.80" width="4.95" height="4.95" fill="#c8c8c8"/><rect x="1176.05" y="728.80" width="4.95" height="4.95" fill="#f8f8f8"/><rect x="1181.00" y="728.80" width="4.95" height="4.95" fill="#eeeeee"/><rect x="1185.95" y="728.80" width="4.95" height="4.95" fill="#e0e0e0"/><rect x="1190.90" y="728.80" width="4.95" height="4.95" fill="#dedede"/><rect x="1195.85" y="728.80" width="4.95" height="4.95" fill="#e8e8e8"/><rect x="1200.80" y="728.80" width="4.95" height="4.95" fill="#e8e8e8"/><rect x="1205.75" y="728.80" width="4.95" height="4.95" fill="#f0f0f0"/><rect x="1210.70" y="728.80" width="4.95" height="4.95" fill="#f0f0f0"/><rect x="1215.65" y="728.80" width="4.95" height="4.95" fill="#eeeeee"/><rect x="1220.60" y="728.80" width="4.95" height="4.95" fill="#eeeeee"/><rect x="1225.55" y="728.80" width="4.95" height="4.95" fill="#eeeeee"/><rect x="1230.50" y="728.80" width="4.95" height="4.95" fill="#b0b0b0"/><rect x="1235.45" y="728.80" width="4.95" height="4.95" fill="#dddddd"/></svg>
<div style="position:absolute;left:1323.70px;top:721.99px;font-size:11px;line-height:11px;color:#333;font-weight:400;white-space:nowrap;">491</div>
<div style="position:absolute;left:1552.70px;top:721.99px;font-size:11px;line-height:11px;color:#333;font-weight:400;white-space:nowrap;">2657</div>
<div style="position:absolute;left:1699px;top:722.8px;width:150px;height:10px;background:#fbfbfb"></div>
<div style="position:absolute;left:1699px;top:722.8px;width:84px;height:10px;background:#e91e63"></div>
<svg style="position:absolute;left:1132px;top:752.9px" width="19" height="19" viewBox="0 0 24 24"><g><path d="M4 6h18V4H4c-1.1 0-2 .9-2 2v11H0v3h14v-3H4V6zm19 2h-6c-.55 0-1 .45-1 1v10c0 .55.45 1 1 1h6c.55 0 1-.45 1-1V9c0-.55-.45-1-1-1zm-1 9h-4v-7h4v7z" fill="#3d3d3d"/></g></svg>
<svg style="position:absolute;left:0;top:0;overflow:visible;filter:blur(0.45px)" width="1" height="1"><rect x="1161.20" y="754.20" width="4.95" height="4.95" fill="#e0e0e0"/><rect x="1166.15" y="754.20" width="4.95" height="4.95" fill="#f0f0f0"/><rect x="1171.10" y="754.20" width="4.95" height="4.95" fill="#b8b8b8"/><rect x="1176.05" y="754.20" width="4.95" height="4.95" fill="#f8f8f8"/><rect x="1181.00" y="754.20" width="4.95" height="4.95" fill="#d0d0d0"/><rect x="1185.95" y="754.20" width="4.95" height="4.95" fill="#d0d0d0"/><rect x="1190.90" y="754.20" width="4.95" height="4.95" fill="#d0d0d0"/><rect x="1195.85" y="754.20" width="4.95" height="4.95" fill="#d5d5d5"/><rect x="1200.80" y="754.20" width="4.95" height="4.95" fill="#d5d5d5"/><rect x="1205.75" y="754.20" width="4.95" height="4.95" fill="#d8d8d8"/><rect x="1210.70" y="754.20" width="4.95" height="4.95" fill="#e0e0e0"/><rect x="1215.65" y="754.20" width="4.95" height="4.95" fill="#e8e8e8"/><rect x="1161.20" y="759.15" width="4.95" height="4.95" fill="#d8d8d8"/><rect x="1166.15" y="759.15" width="4.95" height="4.95" fill="#c0c0c0"/><rect x="1171.10" y="759.15" width="4.95" height="4.95" fill="#999999"/><rect x="1176.05" y="759.15" width="4.95" height="4.95" fill="#e0e0e0"/><rect x="1181.00" y="759.15" width="4.95" height="4.95" fill="#a5a5a5"/><rect x="1185.95" y="759.15" width="4.95" height="4.95" fill="#bdbdbd"/><rect x="1190.90" y="759.15" width="4.95" height="4.95" fill="#bdbdbd"/><rect x="1195.85" y="759.15" width="4.95" height="4.95" fill="#c0c0c0"/><rect x="1200.80" y="759.15" width="4.95" height="4.95" fill="#c8c8c8"/><rect x="1205.75" y="759.15" width="4.95" height="4.95" fill="#c8c8c8"/><rect x="1210.70" y="759.15" width="4.95" height="4.95" fill="#c0c0c0"/><rect x="1215.65" y="759.15" width="4.95" height="4.95" fill="#c5c5c5"/></svg>
<div style="position:absolute;left:1323.70px;top:754.99px;font-size:11px;line-height:11px;color:#333;font-weight:400;white-space:nowrap;">285</div>
<div style="position:absolute;left:1552.70px;top:754.99px;font-size:11px;line-height:11px;color:#333;font-weight:400;white-space:nowrap;">2030</div>
<div style="position:absolute;left:1699px;top:755.8px;width:150px;height:10px;background:#fbfbfb"></div>
<div style="position:absolute;left:1699px;top:755.8px;width:64px;height:10px;background:#e91e63"></div>
<svg style="position:absolute;left:1132px;top:785.9px" width="19" height="19" viewBox="0 0 24 24"><g><path d="M4 6h18V4H4c-1.1 0-2 .9-2 2v11H0v3h14v-3H4V6zm19 2h-6c-.55 0-1 .45-1 1v10c0 .55.45 1 1 1h6c.55 0 1-.45 1-1V9c0-.55-.45-1-1-1zm-1 9h-4v-7h4v7z" fill="#3d3d3d"/></g></svg>
<svg style="position:absolute;left:0;top:0;overflow:visible;filter:blur(0.45px)" width="1" height="1"><rect x="1161.20" y="788.90" width="4.95" height="4.95" fill="#d8d8d8"/><rect x="1166.15" y="788.90" width="4.95" height="4.95" fill="#c8c8c8"/><rect x="1171.10" y="788.90" width="4.95" height="4.95" fill="#c0c0c0"/><rect x="1176.05" y="788.90" width="4.95" height="4.95" fill="#c5c5c5"/><rect x="1181.00" y="788.90" width="4.95" height="4.95" fill="#cfcfcf"/><rect x="1185.95" y="788.90" width="4.95" height="4.95" fill="#c0c0c0"/><rect x="1190.90" y="788.90" width="4.95" height="4.95" fill="#bcbcbc"/><rect x="1161.20" y="793.85" width="4.95" height="4.95" fill="#e8e8e8"/><rect x="1166.15" y="793.85" width="4.95" height="4.95" fill="#d0d0d0"/><rect x="1171.10" y="793.85" width="4.95" height="4.95" fill="#c5c5c5"/><rect x="1176.05" y="793.85" width="4.95" height="4.95" fill="#e8e8e8"/><rect x="1181.00" y="793.85" width="4.95" height="4.95" fill="#f0f0f0"/><rect x="1185.95" y="793.85" width="4.95" height="4.95" fill="#f5f5f5"/><rect x="1190.90" y="793.85" width="4.95" height="4.95" fill="#f8f8f8"/></svg>
<div style="position:absolute;left:1323.70px;top:787.99px;font-size:11px;line-height:11px;color:#333;font-weight:400;white-space:nowrap;">178</div>
<div style="position:absolute;left:1552.70px;top:787.99px;font-size:11px;line-height:11px;color:#333;font-weight:400;white-space:nowrap;">1139</div>
<div style="position:absolute;left:1699px;top:788.8px;width:150px;height:10px;background:#fbfbfb"></div>
<div style="position:absolute;left:1699px;top:788.8px;width:36px;height:10px;background:#ff9800"></div>
<svg style="position:absolute;left:1132px;top:818.9px" width="19" height="19" viewBox="0 0 24 24"><g><path d="M4 6h18V4H4c-1.1 0-2 .9-2 2v11H0v3h14v-3H4V6zm19 2h-6c-.55 0-1 .45-1 1v10c0 .55.45 1 1 1h6c.55 0 1-.45 1-1V9c0-.55-.45-1-1-1zm-1 9h-4v-7h4v7z" fill="#3d3d3d"/></g></svg>
<svg style="position:absolute;left:0;top:0;overflow:visible;filter:blur(0.45px)" width="1" height="1"><rect x="1161.20" y="818.90" width="4.95" height="4.95" fill="#eeeeee"/><rect x="1166.15" y="818.90" width="4.95" height="4.95" fill="#f5f5f5"/><rect x="1171.10" y="818.90" width="4.95" height="4.95" fill="#c8c8c8"/><rect x="1176.05" y="818.90" width="4.95" height="4.95" fill="#f0f0f0"/><rect x="1181.00" y="818.90" width="4.95" height="4.95" fill="#f0f0f0"/><rect x="1185.95" y="818.90" width="4.95" height="4.95" fill="#e0e0e0"/><rect x="1190.90" y="818.90" width="4.95" height="4.95" fill="#e8e8e8"/><rect x="1195.85" y="818.90" width="4.95" height="4.95" fill="#f0f0f0"/><rect x="1200.80" y="818.90" width="4.95" height="4.95" fill="#e8e8e8"/><rect x="1205.75" y="818.90" width="4.95" height="4.95" fill="#dddddd"/><rect x="1210.70" y="818.90" width="4.95" height="4.95" fill="#e8e8e8"/><rect x="1161.20" y="823.85" width="4.95" height="4.95" fill="#c8c8c8"/><rect x="1166.15" y="823.85" width="4.95" height="4.95" fill="#b0b0b0"/><rect x="1171.10" y="823.85" width="4.95" height="4.95" fill="#9e9e9e"/><rect x="1176.05" y="823.85" width="4.95" height="4.95" fill="#d0d0d0"/><rect x="1181.00" y="823.85" width="4.95" height="4.95" fill="#c8c8c8"/><rect x="1185.95" y="823.85" width="4.95" height="4.95" fill="#c0c0c0"/><rect x="1190.90" y="823.85" width="4.95" height="4.95" fill="#a0a0a0"/><rect x="1195.85" y="823.85" width="4.95" height="4.95" fill="#c8c8c8"/><rect x="1200.80" y="823.85" width="4.95" height="4.95" fill="#a5a5a5"/><rect x="1205.75" y="823.85" width="4.95" height="4.95" fill="#d0d0d0"/><rect x="1210.70" y="823.85" width="4.95" height="4.95" fill="#d8d8d8"/><rect x="1161.20" y="828.80" width="4.95" height="4.95" fill="#f0f0f0"/><rect x="1166.15" y="828.80" width="4.95" height="4.95" fill="#f8f8f8"/><rect x="1171.10" y="828.80" width="4.95" height="4.95" fill="#cccccc"/><rect x="1176.05" y="828.80" width="4.95" height="4.95" fill="#f8f8f8"/><rect x="1181.00" y="828.80" width="4.95" height="4.95" fill="#d8d8d8"/><rect x="1185.95" y="828.80" width="4.95" height="4.95" fill="#e8e8e8"/><rect x="1190.90" y="828.80" width="4.95" height="4.95" fill="#f0f0f0"/><rect x="1195.85" y="828.80" width="4.95" height="4.95" fill="#f5f5f5"/><rect x="1200.80" y="828.80" width="4.95" height="4.95" fill="#e0e0e0"/><rect x="1205.75" y="828.80" width="4.95" height="4.95" fill="#d8d8d8"/></svg>
<div style="position:absolute;left:1323.70px;top:820.99px;font-size:11px;line-height:11px;color:#333;font-weight:400;white-space:nowrap;">169</div>
<div style="position:absolute;left:1552.70px;top:820.99px;font-size:11px;line-height:11px;color:#333;font-weight:400;white-space:nowrap;">1126</div>
<div style="position:absolute;left:1699px;top:821.8px;width:150px;height:10px;background:#fbfbfb"></div>
<div style="position:absolute;left:1699px;top:821.8px;width:35px;height:10px;background:#ff9800"></div>
<svg style="position:absolute;left:1132px;top:851.9px" width="19" height="19" viewBox="0 0 24 24"><g><path d="M4 6h18V4H4c-1.1 0-2 .9-2 2v11H0v3h14v-3H4V6zm19 2h-6c-.55 0-1 .45-1 1v10c0 .55.45 1 1 1h6c.55 0 1-.45 1-1V9c0-.55-.45-1-1-1zm-1 9h-4v-7h4v7z" fill="#3d3d3d"/></g></svg>
<svg style="position:absolute;left:0;top:0;overflow:visible;filter:blur(0.45px)" width="1" height="1"><rect x="1161.20" y="854.40" width="4.95" height="4.95" fill="#c8c8c8"/><rect x="1166.15" y="854.40" width="4.95" height="4.95" fill="#d8d8d8"/><rect x="1171.10" y="854.40" width="4.95" height="4.95" fill="#d8d8d8"/><rect x="1176.05" y="854.40" width="4.95" height="4.95" fill="#e0e0e0"/><rect x="1181.00" y="854.40" width="4.95" height="4.95" fill="#b8b8b8"/><rect x="1185.95" y="854.40" width="4.95" height="4.95" fill="#d0d0d0"/><rect x="1190.90" y="854.40" width="4.95" height="4.95" fill="#e0e0e0"/><rect x="1161.20" y="859.35" width="4.95" height="4.95" fill="#c8c8c8"/><rect x="1166.15" y="859.35" width="4.95" height="4.95" fill="#d0d0d0"/><rect x="1171.10" y="859.35" width="4.95" height="4.95" fill="#d0d0d0"/><rect x="1176.05" y="859.35" width="4.95" height="4.95" fill="#d8d8d8"/><rect x="1181.00" y="859.35" width="4.95" height="4.95" fill="#c0c0c0"/><rect x="1185.95" y="859.35" width="4.95" height="4.95" fill="#c8c8c8"/></svg>
<div style="position:absolute;left:1323.70px;top:853.99px;font-size:11px;line-height:11px;color:#333;font-weight:400;white-space:nowrap;">155</div>
<div style="position:absolute;left:1552.70px;top:853.99px;font-size:11px;line-height:11px;color:#333;font-weight:400;white-space:nowrap;">1097</div>
<div style="position:absolute;left:1699px;top:854.8px;width:150px;height:10px;background:#fbfbfb"></div>
<div style="position:absolute;left:1699px;top:854.8px;width:34px;height:10px;background:#ff9800"></div>
<svg style="position:absolute;left:1132px;top:884.9px" width="19" height="19" viewBox="0 0 24 24"><g><path d="M4 6h18V4H4c-1.1 0-2 .9-2 2v11H0v3h14v-3H4V6zm19 2h-6c-.55 0-1 .45-1 1v10c0 .55.45 1 1 1h6c.55 0 1-.45 1-1V9c0-.55-.45-1-1-1zm-1 9h-4v-7h4v7z" fill="#3d3d3d"/></g></svg>
<div style="position:absolute;left:1162.50px;top:886.59px;font-size:11px;line-height:11px;color:#333;font-weight:400;white-space:nowrap;letter-spacing:-0.654px;">NB-REZA</div>
<svg style="position:absolute;left:0;top:0;overflow:visible;filter:blur(0.45px)" width="1" height="1"><rect x="1161.20" y="883.70" width="4.95" height="4.95" fill="#f0f0f0"/><rect x="1166.15" y="883.70" width="4.95" height="4.95" fill="#f4f4f4"/><rect x="1171.10" y="883.70" width="4.95" height="4.95" fill="#e4e4e4"/><rect x="1176.05" y="883.70" width="4.95" height="4.95" fill="#f4f4f4"/><rect x="1181.00" y="883.70" width="4.95" height="4.95" fill="#e0e0e0"/><rect x="1185.95" y="883.70" width="4.95" height="4.95" fill="#e4e4e4"/><rect x="1190.90" y="883.70" width="4.95" height="4.95" fill="#e8e8e8"/><rect x="1195.85" y="883.70" width="4.95" height="4.95" fill="#f0f0f0"/><rect x="1200.80" y="883.70" width="4.95" height="4.95" fill="#f4f4f4"/></svg>
<div style="position:absolute;left:1323.70px;top:886.99px;font-size:11px;line-height:11px;color:#333;font-weight:400;white-space:nowrap;">152</div>
<div style="position:absolute;left:1552.70px;top:886.99px;font-size:11px;line-height:11px;color:#333;font-weight:400;white-space:nowrap;">953</div>
<div style="position:absolute;left:1699px;top:887.8px;width:150px;height:10px;background:#fbfbfb"></div>
<div style="position:absolute;left:1699px;top:887.8px;width:30px;height:10px;background:#ff9800"></div>
</body></html>
